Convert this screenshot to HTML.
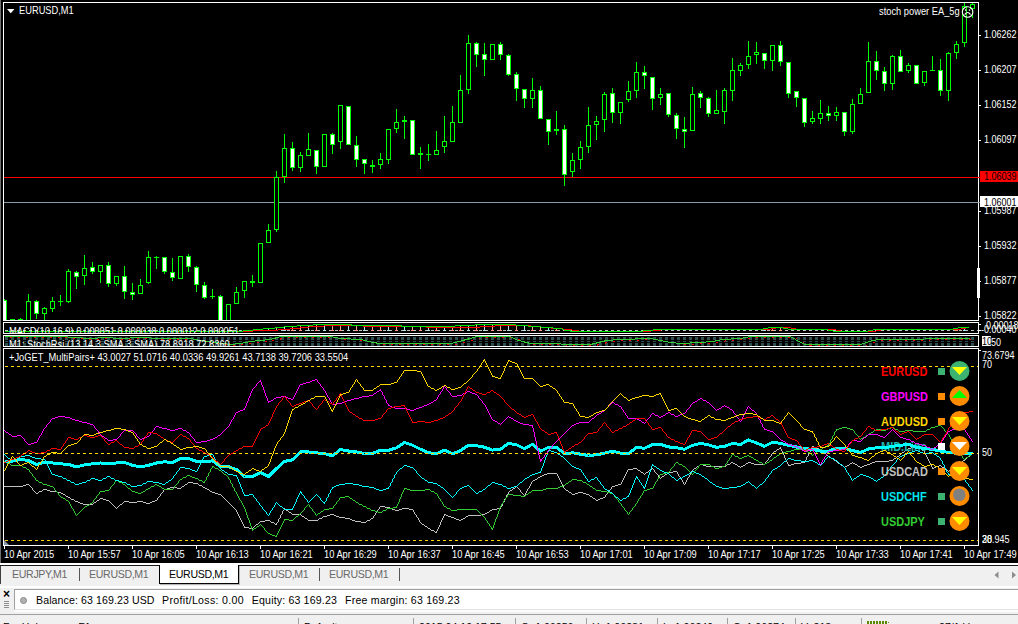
<!DOCTYPE html><html><head><meta charset="utf-8"><title>EURUSD,M1</title><style>
html,body{margin:0;padding:0}
body{width:1018px;height:624px;overflow:hidden;background:#f0f0f0;position:relative;font-family:"Liberation Sans",sans-serif}
#chart{position:absolute;left:0;top:0;width:1018px;height:563px;background:#000;overflow:hidden}
#chart svg{position:absolute;left:0;top:0}
.t{position:absolute;white-space:nowrap;color:#fff;font-size:10.2px;line-height:11px;transform:scaleX(0.913);transform-origin:0 0}
.ax{position:absolute;left:982px;color:#fff;font-size:10.2px;line-height:11px;white-space:nowrap;transform:scaleX(0.884);transform-origin:0 0}
.lg{position:absolute;white-space:nowrap;font-weight:bold;font-size:12.4px;line-height:14px;left:881px;transform:scaleX(0.886);transform-origin:0 0}
.tab{position:absolute;top:567px;font-size:10.6px;line-height:14px;color:#6a6a6a;white-space:nowrap;letter-spacing:-0.33px}
.sep{position:absolute;top:568px;width:1px;height:13px;background:#555}
.st{position:absolute;top:614px;height:10px;left:0;width:1018px;overflow:hidden}
.st span{position:absolute;top:7px;font-size:10.6px;line-height:13px;color:#000;white-space:nowrap}
.st i{position:absolute;top:4px;width:1px;height:8px;background:#a0a0a0}

</style></head><body>
<div id="chart">
<svg width="1018" height="563" viewBox="0 0 1018 563" shape-rendering="crispEdges">
<rect x="0" y="0" width="1" height="563" fill="#6d6d6d"/>
<rect x="4" y="177" width="974" height="1" fill="#ff0000"/>
<rect x="4" y="202" width="974" height="1" fill="#8a99a8"/>
<rect x="4" y="299" width="1" height="22" fill="#00ff00"/>
<rect x="2" y="300" width="5" height="21" fill="#00ff00"/>
<rect x="3" y="301" width="3" height="19" fill="#fff"/>
<rect x="12" y="319" width="1" height="3" fill="#00ff00"/>
<rect x="10" y="319" width="5" height="3" fill="#00ff00"/>
<rect x="11" y="320" width="3" height="1" fill="#000"/>
<rect x="20" y="318" width="1" height="4" fill="#00ff00"/>
<rect x="18" y="319" width="5" height="3" fill="#00ff00"/>
<rect x="19" y="320" width="3" height="1" fill="#000"/>
<rect x="28" y="294" width="1" height="28" fill="#00ff00"/>
<rect x="26" y="301" width="5" height="21" fill="#00ff00"/>
<rect x="27" y="302" width="3" height="19" fill="#000"/>
<rect x="36" y="300" width="1" height="19" fill="#00ff00"/>
<rect x="34" y="301" width="5" height="13" fill="#00ff00"/>
<rect x="35" y="302" width="3" height="11" fill="#fff"/>
<rect x="44" y="307" width="1" height="14" fill="#00ff00"/>
<rect x="42" y="308" width="5" height="6" fill="#00ff00"/>
<rect x="43" y="309" width="3" height="4" fill="#000"/>
<rect x="52" y="297" width="1" height="15" fill="#00ff00"/>
<rect x="50" y="301" width="5" height="8" fill="#00ff00"/>
<rect x="51" y="302" width="3" height="6" fill="#000"/>
<rect x="60" y="295" width="1" height="11" fill="#00ff00"/>
<rect x="58" y="301" width="5" height="1" fill="#00ff00"/>
<rect x="68" y="269" width="1" height="34" fill="#00ff00"/>
<rect x="66" y="271" width="5" height="31" fill="#00ff00"/>
<rect x="67" y="272" width="3" height="29" fill="#000"/>
<rect x="76" y="271" width="1" height="18" fill="#00ff00"/>
<rect x="74" y="272" width="5" height="5" fill="#00ff00"/>
<rect x="75" y="273" width="3" height="3" fill="#fff"/>
<rect x="84" y="255" width="1" height="30" fill="#00ff00"/>
<rect x="82" y="268" width="5" height="8" fill="#00ff00"/>
<rect x="83" y="269" width="3" height="6" fill="#000"/>
<rect x="92" y="262" width="1" height="12" fill="#00ff00"/>
<rect x="90" y="267" width="5" height="5" fill="#00ff00"/>
<rect x="91" y="268" width="3" height="3" fill="#fff"/>
<rect x="100" y="265" width="1" height="18" fill="#00ff00"/>
<rect x="98" y="265" width="5" height="7" fill="#00ff00"/>
<rect x="99" y="266" width="3" height="5" fill="#000"/>
<rect x="108" y="262" width="1" height="25" fill="#00ff00"/>
<rect x="106" y="265" width="5" height="19" fill="#00ff00"/>
<rect x="107" y="266" width="3" height="17" fill="#fff"/>
<rect x="116" y="276" width="1" height="10" fill="#00ff00"/>
<rect x="114" y="276" width="5" height="8" fill="#00ff00"/>
<rect x="115" y="277" width="3" height="6" fill="#000"/>
<rect x="124" y="266" width="1" height="33" fill="#00ff00"/>
<rect x="122" y="276" width="5" height="16" fill="#00ff00"/>
<rect x="123" y="277" width="3" height="14" fill="#fff"/>
<rect x="132" y="283" width="1" height="17" fill="#00ff00"/>
<rect x="130" y="292" width="5" height="3" fill="#00ff00"/>
<rect x="131" y="293" width="3" height="1" fill="#fff"/>
<rect x="140" y="279" width="1" height="15" fill="#00ff00"/>
<rect x="138" y="285" width="5" height="9" fill="#00ff00"/>
<rect x="139" y="286" width="3" height="7" fill="#000"/>
<rect x="148" y="251" width="1" height="33" fill="#00ff00"/>
<rect x="146" y="257" width="5" height="26" fill="#00ff00"/>
<rect x="147" y="258" width="3" height="24" fill="#000"/>
<rect x="156" y="256" width="1" height="13" fill="#00ff00"/>
<rect x="154" y="257" width="5" height="1" fill="#00ff00"/>
<rect x="164" y="257" width="1" height="17" fill="#00ff00"/>
<rect x="162" y="257" width="5" height="15" fill="#00ff00"/>
<rect x="163" y="258" width="3" height="13" fill="#fff"/>
<rect x="172" y="258" width="1" height="23" fill="#00ff00"/>
<rect x="170" y="272" width="5" height="6" fill="#00ff00"/>
<rect x="171" y="273" width="3" height="4" fill="#fff"/>
<rect x="180" y="256" width="1" height="23" fill="#00ff00"/>
<rect x="178" y="256" width="5" height="23" fill="#00ff00"/>
<rect x="179" y="257" width="3" height="21" fill="#000"/>
<rect x="188" y="254" width="1" height="18" fill="#00ff00"/>
<rect x="186" y="256" width="5" height="11" fill="#00ff00"/>
<rect x="187" y="257" width="3" height="9" fill="#fff"/>
<rect x="196" y="266" width="1" height="26" fill="#00ff00"/>
<rect x="194" y="267" width="5" height="18" fill="#00ff00"/>
<rect x="195" y="268" width="3" height="16" fill="#fff"/>
<rect x="204" y="282" width="1" height="17" fill="#00ff00"/>
<rect x="202" y="285" width="5" height="13" fill="#00ff00"/>
<rect x="203" y="286" width="3" height="11" fill="#fff"/>
<rect x="212" y="289" width="1" height="10" fill="#00ff00"/>
<rect x="210" y="296" width="5" height="1" fill="#00ff00"/>
<rect x="220" y="295" width="1" height="27" fill="#00ff00"/>
<rect x="218" y="296" width="5" height="26" fill="#00ff00"/>
<rect x="219" y="297" width="3" height="24" fill="#fff"/>
<rect x="228" y="304" width="1" height="18" fill="#00ff00"/>
<rect x="226" y="304" width="5" height="18" fill="#00ff00"/>
<rect x="227" y="305" width="3" height="16" fill="#000"/>
<rect x="236" y="287" width="1" height="17" fill="#00ff00"/>
<rect x="234" y="292" width="5" height="12" fill="#00ff00"/>
<rect x="235" y="293" width="3" height="10" fill="#000"/>
<rect x="244" y="281" width="1" height="17" fill="#00ff00"/>
<rect x="242" y="281" width="5" height="10" fill="#00ff00"/>
<rect x="243" y="282" width="3" height="8" fill="#000"/>
<rect x="252" y="275" width="1" height="12" fill="#00ff00"/>
<rect x="250" y="281" width="5" height="2" fill="#00ff00"/>
<rect x="260" y="243" width="1" height="40" fill="#00ff00"/>
<rect x="258" y="243" width="5" height="40" fill="#00ff00"/>
<rect x="259" y="244" width="3" height="38" fill="#000"/>
<rect x="268" y="224" width="1" height="19" fill="#00ff00"/>
<rect x="266" y="230" width="5" height="13" fill="#00ff00"/>
<rect x="267" y="231" width="3" height="11" fill="#000"/>
<rect x="276" y="171" width="1" height="61" fill="#00ff00"/>
<rect x="274" y="177" width="5" height="53" fill="#00ff00"/>
<rect x="275" y="178" width="3" height="51" fill="#000"/>
<rect x="284" y="134" width="1" height="49" fill="#00ff00"/>
<rect x="282" y="148" width="5" height="29" fill="#00ff00"/>
<rect x="283" y="149" width="3" height="27" fill="#000"/>
<rect x="292" y="142" width="1" height="29" fill="#00ff00"/>
<rect x="290" y="148" width="5" height="20" fill="#00ff00"/>
<rect x="291" y="149" width="3" height="18" fill="#fff"/>
<rect x="300" y="152" width="1" height="20" fill="#00ff00"/>
<rect x="298" y="155" width="5" height="13" fill="#00ff00"/>
<rect x="299" y="156" width="3" height="11" fill="#000"/>
<rect x="308" y="133" width="1" height="23" fill="#00ff00"/>
<rect x="306" y="149" width="5" height="7" fill="#00ff00"/>
<rect x="307" y="150" width="3" height="5" fill="#000"/>
<rect x="316" y="150" width="1" height="24" fill="#00ff00"/>
<rect x="314" y="150" width="5" height="17" fill="#00ff00"/>
<rect x="315" y="151" width="3" height="15" fill="#fff"/>
<rect x="324" y="134" width="1" height="33" fill="#00ff00"/>
<rect x="322" y="134" width="5" height="33" fill="#00ff00"/>
<rect x="323" y="135" width="3" height="31" fill="#000"/>
<rect x="332" y="133" width="1" height="21" fill="#00ff00"/>
<rect x="330" y="134" width="5" height="11" fill="#00ff00"/>
<rect x="331" y="135" width="3" height="9" fill="#fff"/>
<rect x="340" y="105" width="1" height="44" fill="#00ff00"/>
<rect x="338" y="105" width="5" height="37" fill="#00ff00"/>
<rect x="339" y="106" width="3" height="35" fill="#000"/>
<rect x="348" y="106" width="1" height="39" fill="#00ff00"/>
<rect x="346" y="106" width="5" height="39" fill="#00ff00"/>
<rect x="347" y="107" width="3" height="37" fill="#fff"/>
<rect x="356" y="136" width="1" height="31" fill="#00ff00"/>
<rect x="354" y="145" width="5" height="15" fill="#00ff00"/>
<rect x="355" y="146" width="3" height="13" fill="#fff"/>
<rect x="364" y="159" width="1" height="15" fill="#00ff00"/>
<rect x="362" y="159" width="5" height="5" fill="#00ff00"/>
<rect x="363" y="160" width="3" height="3" fill="#fff"/>
<rect x="372" y="160" width="1" height="13" fill="#00ff00"/>
<rect x="370" y="165" width="5" height="2" fill="#00ff00"/>
<rect x="380" y="153" width="1" height="16" fill="#00ff00"/>
<rect x="378" y="159" width="5" height="6" fill="#00ff00"/>
<rect x="379" y="160" width="3" height="4" fill="#000"/>
<rect x="388" y="129" width="1" height="35" fill="#00ff00"/>
<rect x="386" y="129" width="5" height="31" fill="#00ff00"/>
<rect x="387" y="130" width="3" height="29" fill="#000"/>
<rect x="396" y="109" width="1" height="24" fill="#00ff00"/>
<rect x="394" y="122" width="5" height="7" fill="#00ff00"/>
<rect x="395" y="123" width="3" height="5" fill="#000"/>
<rect x="404" y="116" width="1" height="23" fill="#00ff00"/>
<rect x="402" y="120" width="5" height="2" fill="#00ff00"/>
<rect x="412" y="120" width="1" height="35" fill="#00ff00"/>
<rect x="410" y="120" width="5" height="35" fill="#00ff00"/>
<rect x="411" y="121" width="3" height="33" fill="#fff"/>
<rect x="420" y="147" width="1" height="22" fill="#00ff00"/>
<rect x="418" y="153" width="5" height="2" fill="#00ff00"/>
<rect x="428" y="144" width="1" height="17" fill="#00ff00"/>
<rect x="426" y="154" width="5" height="1" fill="#00ff00"/>
<rect x="436" y="131" width="1" height="24" fill="#00ff00"/>
<rect x="434" y="150" width="5" height="5" fill="#00ff00"/>
<rect x="435" y="151" width="3" height="3" fill="#000"/>
<rect x="444" y="116" width="1" height="37" fill="#00ff00"/>
<rect x="442" y="141" width="5" height="6" fill="#00ff00"/>
<rect x="443" y="142" width="3" height="4" fill="#000"/>
<rect x="452" y="106" width="1" height="36" fill="#00ff00"/>
<rect x="450" y="122" width="5" height="20" fill="#00ff00"/>
<rect x="451" y="123" width="3" height="18" fill="#000"/>
<rect x="460" y="75" width="1" height="48" fill="#00ff00"/>
<rect x="458" y="90" width="5" height="33" fill="#00ff00"/>
<rect x="459" y="91" width="3" height="31" fill="#000"/>
<rect x="468" y="35" width="1" height="59" fill="#00ff00"/>
<rect x="466" y="43" width="5" height="47" fill="#00ff00"/>
<rect x="467" y="44" width="3" height="45" fill="#000"/>
<rect x="476" y="42" width="1" height="25" fill="#00ff00"/>
<rect x="474" y="43" width="5" height="12" fill="#00ff00"/>
<rect x="475" y="44" width="3" height="10" fill="#fff"/>
<rect x="484" y="43" width="1" height="33" fill="#00ff00"/>
<rect x="482" y="54" width="5" height="6" fill="#00ff00"/>
<rect x="483" y="55" width="3" height="4" fill="#fff"/>
<rect x="492" y="44" width="1" height="16" fill="#00ff00"/>
<rect x="490" y="44" width="5" height="16" fill="#00ff00"/>
<rect x="491" y="45" width="3" height="14" fill="#000"/>
<rect x="500" y="42" width="1" height="18" fill="#00ff00"/>
<rect x="498" y="44" width="5" height="11" fill="#00ff00"/>
<rect x="499" y="45" width="3" height="9" fill="#fff"/>
<rect x="508" y="54" width="1" height="22" fill="#00ff00"/>
<rect x="506" y="55" width="5" height="20" fill="#00ff00"/>
<rect x="507" y="56" width="3" height="18" fill="#fff"/>
<rect x="516" y="72" width="1" height="29" fill="#00ff00"/>
<rect x="514" y="74" width="5" height="15" fill="#00ff00"/>
<rect x="515" y="75" width="3" height="13" fill="#fff"/>
<rect x="524" y="89" width="1" height="19" fill="#00ff00"/>
<rect x="522" y="89" width="5" height="10" fill="#00ff00"/>
<rect x="523" y="90" width="3" height="8" fill="#fff"/>
<rect x="532" y="78" width="1" height="30" fill="#00ff00"/>
<rect x="530" y="90" width="5" height="9" fill="#00ff00"/>
<rect x="531" y="91" width="3" height="7" fill="#000"/>
<rect x="540" y="86" width="1" height="33" fill="#00ff00"/>
<rect x="538" y="90" width="5" height="29" fill="#00ff00"/>
<rect x="539" y="91" width="3" height="27" fill="#fff"/>
<rect x="548" y="119" width="1" height="26" fill="#00ff00"/>
<rect x="546" y="119" width="5" height="13" fill="#00ff00"/>
<rect x="547" y="120" width="3" height="11" fill="#fff"/>
<rect x="556" y="111" width="1" height="24" fill="#00ff00"/>
<rect x="554" y="129" width="5" height="2" fill="#00ff00"/>
<rect x="564" y="125" width="1" height="61" fill="#00ff00"/>
<rect x="562" y="129" width="5" height="46" fill="#00ff00"/>
<rect x="563" y="130" width="3" height="44" fill="#fff"/>
<rect x="572" y="153" width="1" height="24" fill="#00ff00"/>
<rect x="570" y="160" width="5" height="12" fill="#00ff00"/>
<rect x="571" y="161" width="3" height="10" fill="#000"/>
<rect x="580" y="141" width="1" height="28" fill="#00ff00"/>
<rect x="578" y="147" width="5" height="13" fill="#00ff00"/>
<rect x="579" y="148" width="3" height="11" fill="#000"/>
<rect x="588" y="107" width="1" height="46" fill="#00ff00"/>
<rect x="586" y="125" width="5" height="22" fill="#00ff00"/>
<rect x="587" y="126" width="3" height="20" fill="#000"/>
<rect x="596" y="116" width="1" height="24" fill="#00ff00"/>
<rect x="594" y="121" width="5" height="4" fill="#00ff00"/>
<rect x="595" y="122" width="3" height="2" fill="#000"/>
<rect x="604" y="92" width="1" height="40" fill="#00ff00"/>
<rect x="602" y="94" width="5" height="26" fill="#00ff00"/>
<rect x="603" y="95" width="3" height="24" fill="#000"/>
<rect x="612" y="88" width="1" height="35" fill="#00ff00"/>
<rect x="610" y="93" width="5" height="20" fill="#00ff00"/>
<rect x="611" y="94" width="3" height="18" fill="#fff"/>
<rect x="620" y="102" width="1" height="22" fill="#00ff00"/>
<rect x="618" y="102" width="5" height="11" fill="#00ff00"/>
<rect x="619" y="103" width="3" height="9" fill="#000"/>
<rect x="628" y="81" width="1" height="21" fill="#00ff00"/>
<rect x="626" y="91" width="5" height="9" fill="#00ff00"/>
<rect x="627" y="92" width="3" height="7" fill="#000"/>
<rect x="636" y="62" width="1" height="36" fill="#00ff00"/>
<rect x="634" y="72" width="5" height="19" fill="#00ff00"/>
<rect x="635" y="73" width="3" height="17" fill="#000"/>
<rect x="644" y="66" width="1" height="23" fill="#00ff00"/>
<rect x="642" y="72" width="5" height="4" fill="#00ff00"/>
<rect x="643" y="73" width="3" height="2" fill="#fff"/>
<rect x="652" y="77" width="1" height="33" fill="#00ff00"/>
<rect x="650" y="77" width="5" height="22" fill="#00ff00"/>
<rect x="651" y="78" width="3" height="20" fill="#fff"/>
<rect x="660" y="88" width="1" height="17" fill="#00ff00"/>
<rect x="658" y="94" width="5" height="4" fill="#00ff00"/>
<rect x="659" y="95" width="3" height="2" fill="#000"/>
<rect x="668" y="93" width="1" height="24" fill="#00ff00"/>
<rect x="666" y="93" width="5" height="22" fill="#00ff00"/>
<rect x="667" y="94" width="3" height="20" fill="#fff"/>
<rect x="676" y="113" width="1" height="26" fill="#00ff00"/>
<rect x="674" y="115" width="5" height="14" fill="#00ff00"/>
<rect x="675" y="116" width="3" height="12" fill="#fff"/>
<rect x="684" y="117" width="1" height="31" fill="#00ff00"/>
<rect x="682" y="129" width="5" height="3" fill="#00ff00"/>
<rect x="683" y="130" width="3" height="1" fill="#fff"/>
<rect x="692" y="87" width="1" height="44" fill="#00ff00"/>
<rect x="690" y="94" width="5" height="37" fill="#00ff00"/>
<rect x="691" y="95" width="3" height="35" fill="#000"/>
<rect x="700" y="91" width="1" height="17" fill="#00ff00"/>
<rect x="698" y="93" width="5" height="5" fill="#00ff00"/>
<rect x="699" y="94" width="3" height="3" fill="#fff"/>
<rect x="708" y="97" width="1" height="20" fill="#00ff00"/>
<rect x="706" y="98" width="5" height="16" fill="#00ff00"/>
<rect x="707" y="99" width="3" height="14" fill="#fff"/>
<rect x="716" y="90" width="1" height="24" fill="#00ff00"/>
<rect x="714" y="110" width="5" height="4" fill="#00ff00"/>
<rect x="715" y="111" width="3" height="2" fill="#000"/>
<rect x="724" y="88" width="1" height="36" fill="#00ff00"/>
<rect x="722" y="90" width="5" height="22" fill="#00ff00"/>
<rect x="723" y="91" width="3" height="20" fill="#000"/>
<rect x="732" y="58" width="1" height="43" fill="#00ff00"/>
<rect x="730" y="70" width="5" height="21" fill="#00ff00"/>
<rect x="731" y="71" width="3" height="19" fill="#000"/>
<rect x="740" y="63" width="1" height="13" fill="#00ff00"/>
<rect x="738" y="65" width="5" height="6" fill="#00ff00"/>
<rect x="739" y="66" width="3" height="4" fill="#000"/>
<rect x="748" y="41" width="1" height="28" fill="#00ff00"/>
<rect x="746" y="56" width="5" height="9" fill="#00ff00"/>
<rect x="747" y="57" width="3" height="7" fill="#000"/>
<rect x="756" y="42" width="1" height="22" fill="#00ff00"/>
<rect x="754" y="52" width="5" height="3" fill="#00ff00"/>
<rect x="755" y="53" width="3" height="1" fill="#000"/>
<rect x="764" y="53" width="1" height="16" fill="#00ff00"/>
<rect x="762" y="53" width="5" height="8" fill="#00ff00"/>
<rect x="763" y="54" width="3" height="6" fill="#fff"/>
<rect x="772" y="45" width="1" height="26" fill="#00ff00"/>
<rect x="770" y="45" width="5" height="16" fill="#00ff00"/>
<rect x="771" y="46" width="3" height="14" fill="#000"/>
<rect x="780" y="41" width="1" height="25" fill="#00ff00"/>
<rect x="778" y="45" width="5" height="17" fill="#00ff00"/>
<rect x="779" y="46" width="3" height="15" fill="#fff"/>
<rect x="788" y="62" width="1" height="36" fill="#00ff00"/>
<rect x="786" y="62" width="5" height="32" fill="#00ff00"/>
<rect x="787" y="63" width="3" height="30" fill="#fff"/>
<rect x="796" y="91" width="1" height="16" fill="#00ff00"/>
<rect x="794" y="91" width="5" height="7" fill="#00ff00"/>
<rect x="795" y="92" width="3" height="5" fill="#fff"/>
<rect x="804" y="98" width="1" height="29" fill="#00ff00"/>
<rect x="802" y="98" width="5" height="25" fill="#00ff00"/>
<rect x="803" y="99" width="3" height="23" fill="#fff"/>
<rect x="812" y="111" width="1" height="13" fill="#00ff00"/>
<rect x="810" y="118" width="5" height="4" fill="#00ff00"/>
<rect x="811" y="119" width="3" height="2" fill="#000"/>
<rect x="820" y="100" width="1" height="24" fill="#00ff00"/>
<rect x="818" y="113" width="5" height="6" fill="#00ff00"/>
<rect x="819" y="114" width="3" height="4" fill="#000"/>
<rect x="828" y="106" width="1" height="15" fill="#00ff00"/>
<rect x="826" y="113" width="5" height="3" fill="#00ff00"/>
<rect x="827" y="114" width="3" height="1" fill="#fff"/>
<rect x="836" y="107" width="1" height="14" fill="#00ff00"/>
<rect x="834" y="112" width="5" height="4" fill="#00ff00"/>
<rect x="835" y="113" width="3" height="2" fill="#000"/>
<rect x="844" y="112" width="1" height="24" fill="#00ff00"/>
<rect x="842" y="112" width="5" height="20" fill="#00ff00"/>
<rect x="843" y="113" width="3" height="18" fill="#fff"/>
<rect x="852" y="99" width="1" height="35" fill="#00ff00"/>
<rect x="850" y="104" width="5" height="28" fill="#00ff00"/>
<rect x="851" y="105" width="3" height="26" fill="#000"/>
<rect x="860" y="88" width="1" height="16" fill="#00ff00"/>
<rect x="858" y="94" width="5" height="10" fill="#00ff00"/>
<rect x="859" y="95" width="3" height="8" fill="#000"/>
<rect x="868" y="42" width="1" height="51" fill="#00ff00"/>
<rect x="866" y="61" width="5" height="32" fill="#00ff00"/>
<rect x="867" y="62" width="3" height="30" fill="#000"/>
<rect x="876" y="51" width="1" height="29" fill="#00ff00"/>
<rect x="874" y="61" width="5" height="10" fill="#00ff00"/>
<rect x="875" y="62" width="3" height="8" fill="#fff"/>
<rect x="884" y="67" width="1" height="24" fill="#00ff00"/>
<rect x="882" y="71" width="5" height="13" fill="#00ff00"/>
<rect x="883" y="72" width="3" height="11" fill="#fff"/>
<rect x="892" y="55" width="1" height="35" fill="#00ff00"/>
<rect x="890" y="56" width="5" height="28" fill="#00ff00"/>
<rect x="891" y="57" width="3" height="26" fill="#000"/>
<rect x="900" y="50" width="1" height="22" fill="#00ff00"/>
<rect x="898" y="56" width="5" height="16" fill="#00ff00"/>
<rect x="899" y="57" width="3" height="14" fill="#fff"/>
<rect x="908" y="63" width="1" height="10" fill="#00ff00"/>
<rect x="906" y="65" width="5" height="6" fill="#00ff00"/>
<rect x="907" y="66" width="3" height="4" fill="#000"/>
<rect x="916" y="65" width="1" height="19" fill="#00ff00"/>
<rect x="914" y="65" width="5" height="19" fill="#00ff00"/>
<rect x="915" y="66" width="3" height="17" fill="#fff"/>
<rect x="924" y="71" width="1" height="15" fill="#00ff00"/>
<rect x="922" y="71" width="5" height="12" fill="#00ff00"/>
<rect x="923" y="72" width="3" height="10" fill="#000"/>
<rect x="932" y="56" width="1" height="14" fill="#00ff00"/>
<rect x="930" y="70" width="5" height="1" fill="#00ff00"/>
<rect x="940" y="59" width="1" height="37" fill="#00ff00"/>
<rect x="938" y="70" width="5" height="21" fill="#00ff00"/>
<rect x="939" y="71" width="3" height="19" fill="#fff"/>
<rect x="948" y="52" width="1" height="49" fill="#00ff00"/>
<rect x="946" y="53" width="5" height="38" fill="#00ff00"/>
<rect x="947" y="54" width="3" height="36" fill="#000"/>
<rect x="956" y="41" width="1" height="18" fill="#00ff00"/>
<rect x="954" y="44" width="5" height="9" fill="#00ff00"/>
<rect x="955" y="45" width="3" height="7" fill="#000"/>
<rect x="964" y="3" width="1" height="44" fill="#00ff00"/>
<rect x="962" y="6" width="5" height="37" fill="#00ff00"/>
<rect x="963" y="7" width="3" height="35" fill="#000"/>
<rect x="972" y="3" width="1" height="15" fill="#00ff00"/>
<rect x="970" y="4" width="5" height="5" fill="#00ff00"/>
<rect x="971" y="5" width="3" height="3" fill="#000"/>
<rect x="0" y="321" width="1018" height="242" fill="#000"/>
<rect x="1" y="0" width="2" height="563" fill="#000"/>
<rect x="0" y="321" width="1" height="242" fill="#6d6d6d"/>
<rect x="3" y="2" width="976" height="1" fill="#fff"/>
<rect x="3" y="2" width="1" height="544" fill="#fff"/>
<rect x="978" y="2" width="1" height="544" fill="#fff"/>
<rect x="3" y="320" width="976" height="1" fill="#fff"/>
<rect x="3" y="322" width="976" height="1" fill="#fff"/>
<rect x="3" y="333" width="976" height="1" fill="#fff"/>
<rect x="3" y="335" width="976" height="1" fill="#fff"/>
<rect x="3" y="346" width="976" height="1" fill="#fff"/>
<rect x="3" y="348" width="976" height="1" fill="#fff"/>
<rect x="3" y="545" width="976" height="1" fill="#fff"/>
<rect x="0" y="321" width="1018" height="1" fill="#000"/>
<rect x="0" y="321" width="1" height="1" fill="#6d6d6d"/>
<rect x="0" y="334" width="1018" height="1" fill="#000"/>
<rect x="0" y="334" width="1" height="1" fill="#6d6d6d"/>
<rect x="0" y="347" width="1018" height="1" fill="#000"/>
<rect x="0" y="347" width="1" height="1" fill="#6d6d6d"/>
<rect x="977" y="268" width="3" height="30" fill="#fff"/>
<rect x="979" y="35" width="2" height="1" fill="#fff"/>
<rect x="979" y="70" width="2" height="1" fill="#fff"/>
<rect x="979" y="105" width="2" height="1" fill="#fff"/>
<rect x="979" y="140" width="2" height="1" fill="#fff"/>
<rect x="979" y="211" width="2" height="1" fill="#fff"/>
<rect x="979" y="246" width="2" height="1" fill="#fff"/>
<rect x="979" y="281" width="2" height="1" fill="#fff"/>
<rect x="979" y="316" width="2" height="1" fill="#fff"/>
<rect x="980" y="171" width="38" height="11" fill="#ff0000"/><rect x="978" y="177" width="2" height="1" fill="#ff0000"/><rect x="978" y="202" width="2" height="1" fill="#8a99a8"/>
<rect x="980" y="196" width="38" height="11" fill="#fff"/>
<path d="M5 330.5H978" stroke="#c0c0c0" stroke-width="1" stroke-dasharray="3 3" fill="none"/>
<rect x="268" y="329" width="1" height="2" fill="#b0e8f0"/>
<rect x="267" y="330" width="3" height="1" fill="#b0e8f0"/>
<rect x="276" y="328" width="1" height="3" fill="#ffa07a"/>
<rect x="275" y="330" width="3" height="1" fill="#ffa07a"/>
<rect x="284" y="327" width="1" height="4" fill="#b0e8f0"/>
<rect x="283" y="330" width="3" height="1" fill="#b0e8f0"/>
<rect x="292" y="327" width="1" height="4" fill="#ffa07a"/>
<rect x="291" y="330" width="3" height="1" fill="#ffa07a"/>
<rect x="300" y="326" width="1" height="5" fill="#ffa07a"/>
<rect x="299" y="330" width="3" height="1" fill="#ffa07a"/>
<rect x="308" y="326" width="1" height="5" fill="#b0e8f0"/>
<rect x="307" y="330" width="3" height="1" fill="#b0e8f0"/>
<rect x="316" y="325" width="1" height="6" fill="#ffa07a"/>
<rect x="315" y="330" width="3" height="1" fill="#ffa07a"/>
<rect x="324" y="325" width="1" height="6" fill="#b0e8f0"/>
<rect x="323" y="330" width="3" height="1" fill="#b0e8f0"/>
<rect x="332" y="325" width="1" height="6" fill="#ffa07a"/>
<rect x="331" y="330" width="3" height="1" fill="#ffa07a"/>
<rect x="340" y="325" width="1" height="6" fill="#ffa07a"/>
<rect x="339" y="330" width="3" height="1" fill="#ffa07a"/>
<rect x="348" y="325" width="1" height="6" fill="#b0e8f0"/>
<rect x="347" y="330" width="3" height="1" fill="#b0e8f0"/>
<rect x="356" y="326" width="1" height="5" fill="#ffa07a"/>
<rect x="355" y="330" width="3" height="1" fill="#ffa07a"/>
<rect x="364" y="326" width="1" height="5" fill="#b0e8f0"/>
<rect x="363" y="330" width="3" height="1" fill="#b0e8f0"/>
<rect x="372" y="326" width="1" height="5" fill="#ffa07a"/>
<rect x="371" y="330" width="3" height="1" fill="#ffa07a"/>
<rect x="380" y="326" width="1" height="5" fill="#ffa07a"/>
<rect x="379" y="330" width="3" height="1" fill="#ffa07a"/>
<rect x="388" y="326" width="1" height="5" fill="#b0e8f0"/>
<rect x="387" y="330" width="3" height="1" fill="#b0e8f0"/>
<rect x="396" y="326" width="1" height="5" fill="#ffa07a"/>
<rect x="395" y="330" width="3" height="1" fill="#ffa07a"/>
<rect x="404" y="327" width="1" height="4" fill="#b0e8f0"/>
<rect x="403" y="330" width="3" height="1" fill="#b0e8f0"/>
<rect x="412" y="327" width="1" height="4" fill="#ffa07a"/>
<rect x="411" y="330" width="3" height="1" fill="#ffa07a"/>
<rect x="420" y="327" width="1" height="4" fill="#ffa07a"/>
<rect x="419" y="330" width="3" height="1" fill="#ffa07a"/>
<rect x="428" y="327" width="1" height="4" fill="#b0e8f0"/>
<rect x="427" y="330" width="3" height="1" fill="#b0e8f0"/>
<rect x="436" y="327" width="1" height="4" fill="#ffa07a"/>
<rect x="435" y="330" width="3" height="1" fill="#ffa07a"/>
<rect x="444" y="327" width="1" height="4" fill="#b0e8f0"/>
<rect x="443" y="330" width="3" height="1" fill="#b0e8f0"/>
<rect x="452" y="327" width="1" height="4" fill="#ffa07a"/>
<rect x="451" y="330" width="3" height="1" fill="#ffa07a"/>
<rect x="460" y="326" width="1" height="5" fill="#ffa07a"/>
<rect x="459" y="330" width="3" height="1" fill="#ffa07a"/>
<rect x="468" y="326" width="1" height="5" fill="#b0e8f0"/>
<rect x="467" y="330" width="3" height="1" fill="#b0e8f0"/>
<rect x="476" y="325" width="1" height="6" fill="#ffa07a"/>
<rect x="475" y="330" width="3" height="1" fill="#ffa07a"/>
<rect x="484" y="325" width="1" height="6" fill="#b0e8f0"/>
<rect x="483" y="330" width="3" height="1" fill="#b0e8f0"/>
<rect x="492" y="325" width="1" height="6" fill="#ffa07a"/>
<rect x="491" y="330" width="3" height="1" fill="#ffa07a"/>
<rect x="500" y="325" width="1" height="6" fill="#ffa07a"/>
<rect x="499" y="330" width="3" height="1" fill="#ffa07a"/>
<rect x="508" y="325" width="1" height="6" fill="#b0e8f0"/>
<rect x="507" y="330" width="3" height="1" fill="#b0e8f0"/>
<rect x="516" y="326" width="1" height="5" fill="#ffa07a"/>
<rect x="515" y="330" width="3" height="1" fill="#ffa07a"/>
<rect x="524" y="326" width="1" height="5" fill="#b0e8f0"/>
<rect x="523" y="330" width="3" height="1" fill="#b0e8f0"/>
<rect x="532" y="327" width="1" height="4" fill="#ffa07a"/>
<rect x="531" y="330" width="3" height="1" fill="#ffa07a"/>
<rect x="540" y="327" width="1" height="4" fill="#ffa07a"/>
<rect x="539" y="330" width="3" height="1" fill="#ffa07a"/>
<rect x="548" y="328" width="1" height="3" fill="#b0e8f0"/>
<rect x="547" y="330" width="3" height="1" fill="#b0e8f0"/>
<rect x="556" y="329" width="1" height="2" fill="#ffa07a"/>
<rect x="555" y="330" width="3" height="1" fill="#ffa07a"/>
<rect x="764" y="329" width="1" height="2" fill="#b0e8f0"/>
<rect x="763" y="330" width="3" height="1" fill="#b0e8f0"/>
<rect x="772" y="328" width="1" height="3" fill="#ffa07a"/>
<rect x="771" y="330" width="3" height="1" fill="#ffa07a"/>
<rect x="780" y="328" width="1" height="3" fill="#ffa07a"/>
<rect x="779" y="330" width="3" height="1" fill="#ffa07a"/>
<rect x="956" y="329" width="1" height="2" fill="#ffa07a"/>
<rect x="955" y="330" width="3" height="1" fill="#ffa07a"/>
<rect x="964" y="328" width="1" height="3" fill="#b0e8f0"/>
<rect x="963" y="330" width="3" height="1" fill="#b0e8f0"/>
<polyline points="4,331 250,331 255,330 262,330 270,330 285,329 295,328 305,327 313,326 335,325 360,325 365,326 420,326 430,327 470,327 490,326 500,325 525,325 535,326 545,327 555,328 570,329 573,330 583,331 648,331 653,330 668,329 708,329 768,329 773,328 778,327 788,327 793,328 798,329 833,329 838,330 843,331 873,331 878,330 883,329 958,329 963,328 968,327" fill="none" stroke="#ff0000" stroke-width="1" transform="translate(0.5,0.5)"/>
<polyline points="4,331 240,331 245,330 250,330 256,329 270,328 280,327 288,326 305,325 320,324 350,324 352,325 400,325 402,326 440,326 470,325 480,324 510,324 520,325 535,326 545,327 560,328 565,330 575,331 640,331 645,330 660,329 700,329 760,329 765,328 770,327 780,327 785,328 790,329 825,329 830,330 835,331 865,331 870,330 875,329 950,329 955,328 960,327 968,327" fill="none" stroke="#00e000" stroke-width="1" transform="translate(0.5,0.5)"/>
<rect x="5" y="337" width="3" height="3" fill="#2f4f4f"/>
<rect x="5" y="343" width="3" height="3" fill="#2f4f4f"/>
<rect x="5" y="341" width="3" height="1" fill="#2f4f4f"/>
<rect x="11" y="337" width="3" height="3" fill="#2f4f4f"/>
<rect x="11" y="343" width="3" height="3" fill="#2f4f4f"/>
<rect x="11" y="341" width="3" height="1" fill="#2f4f4f"/>
<rect x="17" y="337" width="3" height="3" fill="#2f4f4f"/>
<rect x="17" y="343" width="3" height="3" fill="#2f4f4f"/>
<rect x="17" y="341" width="3" height="1" fill="#2f4f4f"/>
<rect x="23" y="337" width="3" height="3" fill="#2f4f4f"/>
<rect x="23" y="343" width="3" height="3" fill="#2f4f4f"/>
<rect x="23" y="341" width="3" height="1" fill="#2f4f4f"/>
<rect x="29" y="337" width="3" height="3" fill="#2f4f4f"/>
<rect x="29" y="343" width="3" height="3" fill="#2f4f4f"/>
<rect x="29" y="341" width="3" height="1" fill="#2f4f4f"/>
<rect x="35" y="337" width="3" height="3" fill="#2f4f4f"/>
<rect x="35" y="343" width="3" height="3" fill="#2f4f4f"/>
<rect x="35" y="341" width="3" height="1" fill="#2f4f4f"/>
<rect x="41" y="337" width="3" height="3" fill="#2f4f4f"/>
<rect x="41" y="343" width="3" height="3" fill="#2f4f4f"/>
<rect x="41" y="341" width="3" height="1" fill="#2f4f4f"/>
<rect x="47" y="337" width="3" height="3" fill="#2f4f4f"/>
<rect x="47" y="343" width="3" height="3" fill="#2f4f4f"/>
<rect x="47" y="341" width="3" height="1" fill="#2f4f4f"/>
<rect x="53" y="337" width="3" height="3" fill="#2f4f4f"/>
<rect x="53" y="343" width="3" height="3" fill="#2f4f4f"/>
<rect x="53" y="341" width="3" height="1" fill="#2f4f4f"/>
<rect x="59" y="337" width="3" height="3" fill="#2f4f4f"/>
<rect x="59" y="343" width="3" height="3" fill="#2f4f4f"/>
<rect x="59" y="341" width="3" height="1" fill="#2f4f4f"/>
<rect x="65" y="337" width="3" height="3" fill="#2f4f4f"/>
<rect x="65" y="343" width="3" height="3" fill="#2f4f4f"/>
<rect x="65" y="341" width="3" height="1" fill="#2f4f4f"/>
<rect x="71" y="337" width="3" height="3" fill="#2f4f4f"/>
<rect x="71" y="343" width="3" height="3" fill="#2f4f4f"/>
<rect x="71" y="341" width="3" height="1" fill="#2f4f4f"/>
<rect x="77" y="337" width="3" height="3" fill="#2f4f4f"/>
<rect x="77" y="343" width="3" height="3" fill="#2f4f4f"/>
<rect x="77" y="341" width="3" height="1" fill="#2f4f4f"/>
<rect x="83" y="337" width="3" height="3" fill="#2f4f4f"/>
<rect x="83" y="343" width="3" height="3" fill="#2f4f4f"/>
<rect x="83" y="341" width="3" height="1" fill="#2f4f4f"/>
<rect x="89" y="337" width="3" height="3" fill="#2f4f4f"/>
<rect x="89" y="343" width="3" height="3" fill="#2f4f4f"/>
<rect x="89" y="341" width="3" height="1" fill="#2f4f4f"/>
<rect x="95" y="337" width="3" height="3" fill="#2f4f4f"/>
<rect x="95" y="343" width="3" height="3" fill="#2f4f4f"/>
<rect x="95" y="341" width="3" height="1" fill="#2f4f4f"/>
<rect x="101" y="337" width="3" height="3" fill="#2f4f4f"/>
<rect x="101" y="343" width="3" height="3" fill="#2f4f4f"/>
<rect x="101" y="341" width="3" height="1" fill="#2f4f4f"/>
<rect x="107" y="337" width="3" height="3" fill="#2f4f4f"/>
<rect x="107" y="343" width="3" height="3" fill="#2f4f4f"/>
<rect x="107" y="341" width="3" height="1" fill="#2f4f4f"/>
<rect x="113" y="337" width="3" height="3" fill="#2f4f4f"/>
<rect x="113" y="343" width="3" height="3" fill="#2f4f4f"/>
<rect x="113" y="341" width="3" height="1" fill="#2f4f4f"/>
<rect x="119" y="337" width="3" height="3" fill="#2f4f4f"/>
<rect x="119" y="343" width="3" height="3" fill="#2f4f4f"/>
<rect x="119" y="341" width="3" height="1" fill="#2f4f4f"/>
<rect x="125" y="337" width="3" height="3" fill="#2f4f4f"/>
<rect x="125" y="343" width="3" height="3" fill="#2f4f4f"/>
<rect x="125" y="341" width="3" height="1" fill="#2f4f4f"/>
<rect x="131" y="337" width="3" height="3" fill="#2f4f4f"/>
<rect x="131" y="343" width="3" height="3" fill="#2f4f4f"/>
<rect x="131" y="341" width="3" height="1" fill="#2f4f4f"/>
<rect x="137" y="337" width="3" height="3" fill="#2f4f4f"/>
<rect x="137" y="343" width="3" height="3" fill="#2f4f4f"/>
<rect x="137" y="341" width="3" height="1" fill="#2f4f4f"/>
<rect x="143" y="337" width="3" height="3" fill="#2f4f4f"/>
<rect x="143" y="343" width="3" height="3" fill="#2f4f4f"/>
<rect x="143" y="341" width="3" height="1" fill="#2f4f4f"/>
<rect x="149" y="337" width="3" height="3" fill="#2f4f4f"/>
<rect x="149" y="343" width="3" height="3" fill="#2f4f4f"/>
<rect x="149" y="341" width="3" height="1" fill="#2f4f4f"/>
<rect x="155" y="337" width="3" height="3" fill="#2f4f4f"/>
<rect x="155" y="343" width="3" height="3" fill="#2f4f4f"/>
<rect x="155" y="341" width="3" height="1" fill="#2f4f4f"/>
<rect x="161" y="337" width="3" height="3" fill="#2f4f4f"/>
<rect x="161" y="343" width="3" height="3" fill="#2f4f4f"/>
<rect x="161" y="341" width="3" height="1" fill="#2f4f4f"/>
<rect x="167" y="337" width="3" height="3" fill="#2f4f4f"/>
<rect x="167" y="343" width="3" height="3" fill="#2f4f4f"/>
<rect x="167" y="341" width="3" height="1" fill="#2f4f4f"/>
<rect x="173" y="337" width="3" height="3" fill="#2f4f4f"/>
<rect x="173" y="343" width="3" height="3" fill="#2f4f4f"/>
<rect x="173" y="341" width="3" height="1" fill="#2f4f4f"/>
<rect x="179" y="337" width="3" height="3" fill="#2f4f4f"/>
<rect x="179" y="343" width="3" height="3" fill="#2f4f4f"/>
<rect x="179" y="341" width="3" height="1" fill="#2f4f4f"/>
<rect x="185" y="337" width="3" height="3" fill="#2f4f4f"/>
<rect x="185" y="343" width="3" height="3" fill="#2f4f4f"/>
<rect x="185" y="341" width="3" height="1" fill="#2f4f4f"/>
<rect x="191" y="337" width="3" height="3" fill="#2f4f4f"/>
<rect x="191" y="343" width="3" height="3" fill="#2f4f4f"/>
<rect x="191" y="341" width="3" height="1" fill="#2f4f4f"/>
<rect x="197" y="337" width="3" height="3" fill="#2f4f4f"/>
<rect x="197" y="343" width="3" height="3" fill="#2f4f4f"/>
<rect x="197" y="341" width="3" height="1" fill="#2f4f4f"/>
<rect x="203" y="337" width="3" height="3" fill="#2f4f4f"/>
<rect x="203" y="343" width="3" height="3" fill="#2f4f4f"/>
<rect x="203" y="341" width="3" height="1" fill="#2f4f4f"/>
<rect x="209" y="337" width="3" height="3" fill="#2f4f4f"/>
<rect x="209" y="343" width="3" height="3" fill="#2f4f4f"/>
<rect x="209" y="341" width="3" height="1" fill="#2f4f4f"/>
<rect x="215" y="337" width="3" height="3" fill="#2f4f4f"/>
<rect x="215" y="343" width="3" height="3" fill="#2f4f4f"/>
<rect x="215" y="341" width="3" height="1" fill="#2f4f4f"/>
<rect x="221" y="337" width="3" height="3" fill="#2f4f4f"/>
<rect x="221" y="343" width="3" height="3" fill="#2f4f4f"/>
<rect x="221" y="341" width="3" height="1" fill="#2f4f4f"/>
<rect x="227" y="337" width="3" height="3" fill="#2f4f4f"/>
<rect x="227" y="343" width="3" height="3" fill="#2f4f4f"/>
<rect x="227" y="341" width="3" height="1" fill="#2f4f4f"/>
<rect x="233" y="337" width="3" height="3" fill="#2f4f4f"/>
<rect x="233" y="343" width="3" height="3" fill="#2f4f4f"/>
<rect x="233" y="341" width="3" height="1" fill="#2f4f4f"/>
<rect x="239" y="337" width="3" height="3" fill="#2f4f4f"/>
<rect x="239" y="343" width="3" height="3" fill="#2f4f4f"/>
<rect x="239" y="341" width="3" height="1" fill="#2f4f4f"/>
<rect x="245" y="337" width="3" height="3" fill="#2f4f4f"/>
<rect x="245" y="343" width="3" height="3" fill="#2f4f4f"/>
<rect x="245" y="341" width="3" height="1" fill="#2f4f4f"/>
<rect x="251" y="337" width="3" height="3" fill="#2f4f4f"/>
<rect x="251" y="343" width="3" height="3" fill="#2f4f4f"/>
<rect x="251" y="341" width="3" height="1" fill="#2f4f4f"/>
<rect x="257" y="337" width="3" height="3" fill="#2f4f4f"/>
<rect x="257" y="343" width="3" height="3" fill="#2f4f4f"/>
<rect x="257" y="341" width="3" height="1" fill="#2f4f4f"/>
<rect x="263" y="337" width="3" height="3" fill="#2f4f4f"/>
<rect x="263" y="343" width="3" height="3" fill="#2f4f4f"/>
<rect x="263" y="341" width="3" height="1" fill="#2f4f4f"/>
<rect x="269" y="337" width="3" height="3" fill="#2f4f4f"/>
<rect x="269" y="343" width="3" height="3" fill="#2f4f4f"/>
<rect x="269" y="341" width="3" height="1" fill="#2f4f4f"/>
<rect x="275" y="337" width="3" height="3" fill="#2f4f4f"/>
<rect x="275" y="343" width="3" height="3" fill="#2f4f4f"/>
<rect x="275" y="341" width="3" height="1" fill="#2f4f4f"/>
<rect x="281" y="337" width="3" height="3" fill="#2f4f4f"/>
<rect x="281" y="343" width="3" height="3" fill="#2f4f4f"/>
<rect x="281" y="341" width="3" height="1" fill="#2f4f4f"/>
<rect x="287" y="337" width="3" height="3" fill="#2f4f4f"/>
<rect x="287" y="343" width="3" height="3" fill="#2f4f4f"/>
<rect x="287" y="341" width="3" height="1" fill="#2f4f4f"/>
<rect x="293" y="337" width="3" height="3" fill="#2f4f4f"/>
<rect x="293" y="343" width="3" height="3" fill="#2f4f4f"/>
<rect x="293" y="341" width="3" height="1" fill="#2f4f4f"/>
<rect x="299" y="337" width="3" height="3" fill="#2f4f4f"/>
<rect x="299" y="343" width="3" height="3" fill="#2f4f4f"/>
<rect x="299" y="341" width="3" height="1" fill="#2f4f4f"/>
<rect x="305" y="337" width="3" height="3" fill="#2f4f4f"/>
<rect x="305" y="343" width="3" height="3" fill="#2f4f4f"/>
<rect x="305" y="341" width="3" height="1" fill="#2f4f4f"/>
<rect x="311" y="337" width="3" height="3" fill="#2f4f4f"/>
<rect x="311" y="343" width="3" height="3" fill="#2f4f4f"/>
<rect x="311" y="341" width="3" height="1" fill="#2f4f4f"/>
<rect x="317" y="337" width="3" height="3" fill="#2f4f4f"/>
<rect x="317" y="343" width="3" height="3" fill="#2f4f4f"/>
<rect x="317" y="341" width="3" height="1" fill="#2f4f4f"/>
<rect x="323" y="337" width="3" height="3" fill="#2f4f4f"/>
<rect x="323" y="343" width="3" height="3" fill="#2f4f4f"/>
<rect x="323" y="341" width="3" height="1" fill="#2f4f4f"/>
<rect x="329" y="337" width="3" height="3" fill="#2f4f4f"/>
<rect x="329" y="343" width="3" height="3" fill="#2f4f4f"/>
<rect x="329" y="341" width="3" height="1" fill="#2f4f4f"/>
<rect x="335" y="337" width="3" height="3" fill="#2f4f4f"/>
<rect x="335" y="343" width="3" height="3" fill="#2f4f4f"/>
<rect x="335" y="341" width="3" height="1" fill="#2f4f4f"/>
<rect x="341" y="337" width="3" height="3" fill="#2f4f4f"/>
<rect x="341" y="343" width="3" height="3" fill="#2f4f4f"/>
<rect x="341" y="341" width="3" height="1" fill="#2f4f4f"/>
<rect x="347" y="337" width="3" height="3" fill="#2f4f4f"/>
<rect x="347" y="343" width="3" height="3" fill="#2f4f4f"/>
<rect x="347" y="341" width="3" height="1" fill="#2f4f4f"/>
<rect x="353" y="337" width="3" height="3" fill="#2f4f4f"/>
<rect x="353" y="343" width="3" height="3" fill="#2f4f4f"/>
<rect x="353" y="341" width="3" height="1" fill="#2f4f4f"/>
<rect x="359" y="337" width="3" height="3" fill="#2f4f4f"/>
<rect x="359" y="343" width="3" height="3" fill="#2f4f4f"/>
<rect x="359" y="341" width="3" height="1" fill="#2f4f4f"/>
<rect x="365" y="337" width="3" height="3" fill="#2f4f4f"/>
<rect x="365" y="343" width="3" height="3" fill="#2f4f4f"/>
<rect x="365" y="341" width="3" height="1" fill="#2f4f4f"/>
<rect x="371" y="337" width="3" height="3" fill="#2f4f4f"/>
<rect x="371" y="343" width="3" height="3" fill="#2f4f4f"/>
<rect x="371" y="341" width="3" height="1" fill="#2f4f4f"/>
<rect x="377" y="337" width="3" height="3" fill="#2f4f4f"/>
<rect x="377" y="343" width="3" height="3" fill="#2f4f4f"/>
<rect x="377" y="341" width="3" height="1" fill="#2f4f4f"/>
<rect x="383" y="337" width="3" height="3" fill="#2f4f4f"/>
<rect x="383" y="343" width="3" height="3" fill="#2f4f4f"/>
<rect x="383" y="341" width="3" height="1" fill="#2f4f4f"/>
<rect x="389" y="337" width="3" height="3" fill="#2f4f4f"/>
<rect x="389" y="343" width="3" height="3" fill="#2f4f4f"/>
<rect x="389" y="341" width="3" height="1" fill="#2f4f4f"/>
<rect x="395" y="337" width="3" height="3" fill="#2f4f4f"/>
<rect x="395" y="343" width="3" height="3" fill="#2f4f4f"/>
<rect x="395" y="341" width="3" height="1" fill="#2f4f4f"/>
<rect x="401" y="337" width="3" height="3" fill="#2f4f4f"/>
<rect x="401" y="343" width="3" height="3" fill="#2f4f4f"/>
<rect x="401" y="341" width="3" height="1" fill="#2f4f4f"/>
<rect x="407" y="337" width="3" height="3" fill="#2f4f4f"/>
<rect x="407" y="343" width="3" height="3" fill="#2f4f4f"/>
<rect x="407" y="341" width="3" height="1" fill="#2f4f4f"/>
<rect x="413" y="337" width="3" height="3" fill="#2f4f4f"/>
<rect x="413" y="343" width="3" height="3" fill="#2f4f4f"/>
<rect x="413" y="341" width="3" height="1" fill="#2f4f4f"/>
<rect x="419" y="337" width="3" height="3" fill="#2f4f4f"/>
<rect x="419" y="343" width="3" height="3" fill="#2f4f4f"/>
<rect x="419" y="341" width="3" height="1" fill="#2f4f4f"/>
<rect x="425" y="337" width="3" height="3" fill="#2f4f4f"/>
<rect x="425" y="343" width="3" height="3" fill="#2f4f4f"/>
<rect x="425" y="341" width="3" height="1" fill="#2f4f4f"/>
<rect x="431" y="337" width="3" height="3" fill="#2f4f4f"/>
<rect x="431" y="343" width="3" height="3" fill="#2f4f4f"/>
<rect x="431" y="341" width="3" height="1" fill="#2f4f4f"/>
<rect x="437" y="337" width="3" height="3" fill="#2f4f4f"/>
<rect x="437" y="343" width="3" height="3" fill="#2f4f4f"/>
<rect x="437" y="341" width="3" height="1" fill="#2f4f4f"/>
<rect x="443" y="337" width="3" height="3" fill="#2f4f4f"/>
<rect x="443" y="343" width="3" height="3" fill="#2f4f4f"/>
<rect x="443" y="341" width="3" height="1" fill="#2f4f4f"/>
<rect x="449" y="337" width="3" height="3" fill="#2f4f4f"/>
<rect x="449" y="343" width="3" height="3" fill="#2f4f4f"/>
<rect x="449" y="341" width="3" height="1" fill="#2f4f4f"/>
<rect x="455" y="337" width="3" height="3" fill="#2f4f4f"/>
<rect x="455" y="343" width="3" height="3" fill="#2f4f4f"/>
<rect x="455" y="341" width="3" height="1" fill="#2f4f4f"/>
<rect x="461" y="337" width="3" height="3" fill="#2f4f4f"/>
<rect x="461" y="343" width="3" height="3" fill="#2f4f4f"/>
<rect x="461" y="341" width="3" height="1" fill="#2f4f4f"/>
<rect x="467" y="337" width="3" height="3" fill="#2f4f4f"/>
<rect x="467" y="343" width="3" height="3" fill="#2f4f4f"/>
<rect x="467" y="341" width="3" height="1" fill="#2f4f4f"/>
<rect x="473" y="337" width="3" height="3" fill="#2f4f4f"/>
<rect x="473" y="343" width="3" height="3" fill="#2f4f4f"/>
<rect x="473" y="341" width="3" height="1" fill="#2f4f4f"/>
<rect x="479" y="337" width="3" height="3" fill="#2f4f4f"/>
<rect x="479" y="343" width="3" height="3" fill="#2f4f4f"/>
<rect x="479" y="341" width="3" height="1" fill="#2f4f4f"/>
<rect x="485" y="337" width="3" height="3" fill="#2f4f4f"/>
<rect x="485" y="343" width="3" height="3" fill="#2f4f4f"/>
<rect x="485" y="341" width="3" height="1" fill="#2f4f4f"/>
<rect x="491" y="337" width="3" height="3" fill="#2f4f4f"/>
<rect x="491" y="343" width="3" height="3" fill="#2f4f4f"/>
<rect x="491" y="341" width="3" height="1" fill="#2f4f4f"/>
<rect x="497" y="337" width="3" height="3" fill="#2f4f4f"/>
<rect x="497" y="343" width="3" height="3" fill="#2f4f4f"/>
<rect x="497" y="341" width="3" height="1" fill="#2f4f4f"/>
<rect x="503" y="337" width="3" height="3" fill="#2f4f4f"/>
<rect x="503" y="343" width="3" height="3" fill="#2f4f4f"/>
<rect x="503" y="341" width="3" height="1" fill="#2f4f4f"/>
<rect x="509" y="337" width="3" height="3" fill="#2f4f4f"/>
<rect x="509" y="343" width="3" height="3" fill="#2f4f4f"/>
<rect x="509" y="341" width="3" height="1" fill="#2f4f4f"/>
<rect x="515" y="337" width="3" height="3" fill="#2f4f4f"/>
<rect x="515" y="343" width="3" height="3" fill="#2f4f4f"/>
<rect x="515" y="341" width="3" height="1" fill="#2f4f4f"/>
<rect x="521" y="337" width="3" height="3" fill="#2f4f4f"/>
<rect x="521" y="343" width="3" height="3" fill="#2f4f4f"/>
<rect x="521" y="341" width="3" height="1" fill="#2f4f4f"/>
<rect x="527" y="337" width="3" height="3" fill="#2f4f4f"/>
<rect x="527" y="343" width="3" height="3" fill="#2f4f4f"/>
<rect x="527" y="341" width="3" height="1" fill="#2f4f4f"/>
<rect x="533" y="337" width="3" height="3" fill="#2f4f4f"/>
<rect x="533" y="343" width="3" height="3" fill="#2f4f4f"/>
<rect x="533" y="341" width="3" height="1" fill="#2f4f4f"/>
<rect x="539" y="337" width="3" height="3" fill="#2f4f4f"/>
<rect x="539" y="343" width="3" height="3" fill="#2f4f4f"/>
<rect x="539" y="341" width="3" height="1" fill="#2f4f4f"/>
<rect x="545" y="337" width="3" height="3" fill="#2f4f4f"/>
<rect x="545" y="343" width="3" height="3" fill="#2f4f4f"/>
<rect x="545" y="341" width="3" height="1" fill="#2f4f4f"/>
<rect x="551" y="337" width="3" height="3" fill="#2f4f4f"/>
<rect x="551" y="343" width="3" height="3" fill="#2f4f4f"/>
<rect x="551" y="341" width="3" height="1" fill="#2f4f4f"/>
<rect x="557" y="337" width="3" height="3" fill="#2f4f4f"/>
<rect x="557" y="343" width="3" height="3" fill="#2f4f4f"/>
<rect x="557" y="341" width="3" height="1" fill="#2f4f4f"/>
<rect x="563" y="337" width="3" height="3" fill="#2f4f4f"/>
<rect x="563" y="343" width="3" height="3" fill="#2f4f4f"/>
<rect x="563" y="341" width="3" height="1" fill="#2f4f4f"/>
<rect x="569" y="337" width="3" height="3" fill="#2f4f4f"/>
<rect x="569" y="343" width="3" height="3" fill="#2f4f4f"/>
<rect x="569" y="341" width="3" height="1" fill="#2f4f4f"/>
<rect x="575" y="337" width="3" height="3" fill="#2f4f4f"/>
<rect x="575" y="343" width="3" height="3" fill="#2f4f4f"/>
<rect x="575" y="341" width="3" height="1" fill="#2f4f4f"/>
<rect x="581" y="337" width="3" height="3" fill="#2f4f4f"/>
<rect x="581" y="343" width="3" height="3" fill="#2f4f4f"/>
<rect x="581" y="341" width="3" height="1" fill="#2f4f4f"/>
<rect x="587" y="337" width="3" height="3" fill="#2f4f4f"/>
<rect x="587" y="343" width="3" height="3" fill="#2f4f4f"/>
<rect x="587" y="341" width="3" height="1" fill="#2f4f4f"/>
<rect x="593" y="337" width="3" height="3" fill="#2f4f4f"/>
<rect x="593" y="343" width="3" height="3" fill="#2f4f4f"/>
<rect x="593" y="341" width="3" height="1" fill="#2f4f4f"/>
<rect x="599" y="337" width="3" height="3" fill="#2f4f4f"/>
<rect x="599" y="343" width="3" height="3" fill="#2f4f4f"/>
<rect x="599" y="341" width="3" height="1" fill="#2f4f4f"/>
<rect x="605" y="337" width="3" height="3" fill="#2f4f4f"/>
<rect x="605" y="343" width="3" height="3" fill="#2f4f4f"/>
<rect x="605" y="341" width="3" height="1" fill="#2f4f4f"/>
<rect x="611" y="337" width="3" height="3" fill="#2f4f4f"/>
<rect x="611" y="343" width="3" height="3" fill="#2f4f4f"/>
<rect x="611" y="341" width="3" height="1" fill="#2f4f4f"/>
<rect x="617" y="337" width="3" height="3" fill="#2f4f4f"/>
<rect x="617" y="343" width="3" height="3" fill="#2f4f4f"/>
<rect x="617" y="341" width="3" height="1" fill="#2f4f4f"/>
<rect x="623" y="337" width="3" height="3" fill="#2f4f4f"/>
<rect x="623" y="343" width="3" height="3" fill="#2f4f4f"/>
<rect x="623" y="341" width="3" height="1" fill="#2f4f4f"/>
<rect x="629" y="337" width="3" height="3" fill="#2f4f4f"/>
<rect x="629" y="343" width="3" height="3" fill="#2f4f4f"/>
<rect x="629" y="341" width="3" height="1" fill="#2f4f4f"/>
<rect x="635" y="337" width="3" height="3" fill="#2f4f4f"/>
<rect x="635" y="343" width="3" height="3" fill="#2f4f4f"/>
<rect x="635" y="341" width="3" height="1" fill="#2f4f4f"/>
<rect x="641" y="337" width="3" height="3" fill="#2f4f4f"/>
<rect x="641" y="343" width="3" height="3" fill="#2f4f4f"/>
<rect x="641" y="341" width="3" height="1" fill="#2f4f4f"/>
<rect x="647" y="337" width="3" height="3" fill="#2f4f4f"/>
<rect x="647" y="343" width="3" height="3" fill="#2f4f4f"/>
<rect x="647" y="341" width="3" height="1" fill="#2f4f4f"/>
<rect x="653" y="337" width="3" height="3" fill="#2f4f4f"/>
<rect x="653" y="343" width="3" height="3" fill="#2f4f4f"/>
<rect x="653" y="341" width="3" height="1" fill="#2f4f4f"/>
<rect x="659" y="337" width="3" height="3" fill="#2f4f4f"/>
<rect x="659" y="343" width="3" height="3" fill="#2f4f4f"/>
<rect x="659" y="341" width="3" height="1" fill="#2f4f4f"/>
<rect x="665" y="337" width="3" height="3" fill="#2f4f4f"/>
<rect x="665" y="343" width="3" height="3" fill="#2f4f4f"/>
<rect x="665" y="341" width="3" height="1" fill="#2f4f4f"/>
<rect x="671" y="337" width="3" height="3" fill="#2f4f4f"/>
<rect x="671" y="343" width="3" height="3" fill="#2f4f4f"/>
<rect x="671" y="341" width="3" height="1" fill="#2f4f4f"/>
<rect x="677" y="337" width="3" height="3" fill="#2f4f4f"/>
<rect x="677" y="343" width="3" height="3" fill="#2f4f4f"/>
<rect x="677" y="341" width="3" height="1" fill="#2f4f4f"/>
<rect x="683" y="337" width="3" height="3" fill="#2f4f4f"/>
<rect x="683" y="343" width="3" height="3" fill="#2f4f4f"/>
<rect x="683" y="341" width="3" height="1" fill="#2f4f4f"/>
<rect x="689" y="337" width="3" height="3" fill="#2f4f4f"/>
<rect x="689" y="343" width="3" height="3" fill="#2f4f4f"/>
<rect x="689" y="341" width="3" height="1" fill="#2f4f4f"/>
<rect x="695" y="337" width="3" height="3" fill="#2f4f4f"/>
<rect x="695" y="343" width="3" height="3" fill="#2f4f4f"/>
<rect x="695" y="341" width="3" height="1" fill="#2f4f4f"/>
<rect x="701" y="337" width="3" height="3" fill="#2f4f4f"/>
<rect x="701" y="343" width="3" height="3" fill="#2f4f4f"/>
<rect x="701" y="341" width="3" height="1" fill="#2f4f4f"/>
<rect x="707" y="337" width="3" height="3" fill="#2f4f4f"/>
<rect x="707" y="343" width="3" height="3" fill="#2f4f4f"/>
<rect x="707" y="341" width="3" height="1" fill="#2f4f4f"/>
<rect x="713" y="337" width="3" height="3" fill="#2f4f4f"/>
<rect x="713" y="343" width="3" height="3" fill="#2f4f4f"/>
<rect x="713" y="341" width="3" height="1" fill="#2f4f4f"/>
<rect x="719" y="337" width="3" height="3" fill="#2f4f4f"/>
<rect x="719" y="343" width="3" height="3" fill="#2f4f4f"/>
<rect x="719" y="341" width="3" height="1" fill="#2f4f4f"/>
<rect x="725" y="337" width="3" height="3" fill="#2f4f4f"/>
<rect x="725" y="343" width="3" height="3" fill="#2f4f4f"/>
<rect x="725" y="341" width="3" height="1" fill="#2f4f4f"/>
<rect x="731" y="337" width="3" height="3" fill="#2f4f4f"/>
<rect x="731" y="343" width="3" height="3" fill="#2f4f4f"/>
<rect x="731" y="341" width="3" height="1" fill="#2f4f4f"/>
<rect x="737" y="337" width="3" height="3" fill="#2f4f4f"/>
<rect x="737" y="343" width="3" height="3" fill="#2f4f4f"/>
<rect x="737" y="341" width="3" height="1" fill="#2f4f4f"/>
<rect x="743" y="337" width="3" height="3" fill="#2f4f4f"/>
<rect x="743" y="343" width="3" height="3" fill="#2f4f4f"/>
<rect x="743" y="341" width="3" height="1" fill="#2f4f4f"/>
<rect x="749" y="337" width="3" height="3" fill="#2f4f4f"/>
<rect x="749" y="343" width="3" height="3" fill="#2f4f4f"/>
<rect x="749" y="341" width="3" height="1" fill="#2f4f4f"/>
<rect x="755" y="337" width="3" height="3" fill="#2f4f4f"/>
<rect x="755" y="343" width="3" height="3" fill="#2f4f4f"/>
<rect x="755" y="341" width="3" height="1" fill="#2f4f4f"/>
<rect x="761" y="337" width="3" height="3" fill="#2f4f4f"/>
<rect x="761" y="343" width="3" height="3" fill="#2f4f4f"/>
<rect x="761" y="341" width="3" height="1" fill="#2f4f4f"/>
<rect x="767" y="337" width="3" height="3" fill="#2f4f4f"/>
<rect x="767" y="343" width="3" height="3" fill="#2f4f4f"/>
<rect x="767" y="341" width="3" height="1" fill="#2f4f4f"/>
<rect x="773" y="337" width="3" height="3" fill="#2f4f4f"/>
<rect x="773" y="343" width="3" height="3" fill="#2f4f4f"/>
<rect x="773" y="341" width="3" height="1" fill="#2f4f4f"/>
<rect x="779" y="337" width="3" height="3" fill="#2f4f4f"/>
<rect x="779" y="343" width="3" height="3" fill="#2f4f4f"/>
<rect x="779" y="341" width="3" height="1" fill="#2f4f4f"/>
<rect x="785" y="337" width="3" height="3" fill="#2f4f4f"/>
<rect x="785" y="343" width="3" height="3" fill="#2f4f4f"/>
<rect x="785" y="341" width="3" height="1" fill="#2f4f4f"/>
<rect x="791" y="337" width="3" height="3" fill="#2f4f4f"/>
<rect x="791" y="343" width="3" height="3" fill="#2f4f4f"/>
<rect x="791" y="341" width="3" height="1" fill="#2f4f4f"/>
<rect x="797" y="337" width="3" height="3" fill="#2f4f4f"/>
<rect x="797" y="343" width="3" height="3" fill="#2f4f4f"/>
<rect x="797" y="341" width="3" height="1" fill="#2f4f4f"/>
<rect x="803" y="337" width="3" height="3" fill="#2f4f4f"/>
<rect x="803" y="343" width="3" height="3" fill="#2f4f4f"/>
<rect x="803" y="341" width="3" height="1" fill="#2f4f4f"/>
<rect x="809" y="337" width="3" height="3" fill="#2f4f4f"/>
<rect x="809" y="343" width="3" height="3" fill="#2f4f4f"/>
<rect x="809" y="341" width="3" height="1" fill="#2f4f4f"/>
<rect x="815" y="337" width="3" height="3" fill="#2f4f4f"/>
<rect x="815" y="343" width="3" height="3" fill="#2f4f4f"/>
<rect x="815" y="341" width="3" height="1" fill="#2f4f4f"/>
<rect x="821" y="337" width="3" height="3" fill="#2f4f4f"/>
<rect x="821" y="343" width="3" height="3" fill="#2f4f4f"/>
<rect x="821" y="341" width="3" height="1" fill="#2f4f4f"/>
<rect x="827" y="337" width="3" height="3" fill="#2f4f4f"/>
<rect x="827" y="343" width="3" height="3" fill="#2f4f4f"/>
<rect x="827" y="341" width="3" height="1" fill="#2f4f4f"/>
<rect x="833" y="337" width="3" height="3" fill="#2f4f4f"/>
<rect x="833" y="343" width="3" height="3" fill="#2f4f4f"/>
<rect x="833" y="341" width="3" height="1" fill="#2f4f4f"/>
<rect x="839" y="337" width="3" height="3" fill="#2f4f4f"/>
<rect x="839" y="343" width="3" height="3" fill="#2f4f4f"/>
<rect x="839" y="341" width="3" height="1" fill="#2f4f4f"/>
<rect x="845" y="337" width="3" height="3" fill="#2f4f4f"/>
<rect x="845" y="343" width="3" height="3" fill="#2f4f4f"/>
<rect x="845" y="341" width="3" height="1" fill="#2f4f4f"/>
<rect x="851" y="337" width="3" height="3" fill="#2f4f4f"/>
<rect x="851" y="343" width="3" height="3" fill="#2f4f4f"/>
<rect x="851" y="341" width="3" height="1" fill="#2f4f4f"/>
<rect x="857" y="337" width="3" height="3" fill="#2f4f4f"/>
<rect x="857" y="343" width="3" height="3" fill="#2f4f4f"/>
<rect x="857" y="341" width="3" height="1" fill="#2f4f4f"/>
<rect x="863" y="337" width="3" height="3" fill="#2f4f4f"/>
<rect x="863" y="343" width="3" height="3" fill="#2f4f4f"/>
<rect x="863" y="341" width="3" height="1" fill="#2f4f4f"/>
<rect x="869" y="337" width="3" height="3" fill="#2f4f4f"/>
<rect x="869" y="343" width="3" height="3" fill="#2f4f4f"/>
<rect x="869" y="341" width="3" height="1" fill="#2f4f4f"/>
<rect x="875" y="337" width="3" height="3" fill="#2f4f4f"/>
<rect x="875" y="343" width="3" height="3" fill="#2f4f4f"/>
<rect x="875" y="341" width="3" height="1" fill="#2f4f4f"/>
<rect x="881" y="337" width="3" height="3" fill="#2f4f4f"/>
<rect x="881" y="343" width="3" height="3" fill="#2f4f4f"/>
<rect x="881" y="341" width="3" height="1" fill="#2f4f4f"/>
<rect x="887" y="337" width="3" height="3" fill="#2f4f4f"/>
<rect x="887" y="343" width="3" height="3" fill="#2f4f4f"/>
<rect x="887" y="341" width="3" height="1" fill="#2f4f4f"/>
<rect x="893" y="337" width="3" height="3" fill="#2f4f4f"/>
<rect x="893" y="343" width="3" height="3" fill="#2f4f4f"/>
<rect x="893" y="341" width="3" height="1" fill="#2f4f4f"/>
<rect x="899" y="337" width="3" height="3" fill="#2f4f4f"/>
<rect x="899" y="343" width="3" height="3" fill="#2f4f4f"/>
<rect x="899" y="341" width="3" height="1" fill="#2f4f4f"/>
<rect x="905" y="337" width="3" height="3" fill="#2f4f4f"/>
<rect x="905" y="343" width="3" height="3" fill="#2f4f4f"/>
<rect x="905" y="341" width="3" height="1" fill="#2f4f4f"/>
<rect x="911" y="337" width="3" height="3" fill="#2f4f4f"/>
<rect x="911" y="343" width="3" height="3" fill="#2f4f4f"/>
<rect x="911" y="341" width="3" height="1" fill="#2f4f4f"/>
<rect x="917" y="337" width="3" height="3" fill="#2f4f4f"/>
<rect x="917" y="343" width="3" height="3" fill="#2f4f4f"/>
<rect x="917" y="341" width="3" height="1" fill="#2f4f4f"/>
<rect x="923" y="337" width="3" height="3" fill="#2f4f4f"/>
<rect x="923" y="343" width="3" height="3" fill="#2f4f4f"/>
<rect x="923" y="341" width="3" height="1" fill="#2f4f4f"/>
<rect x="929" y="337" width="3" height="3" fill="#2f4f4f"/>
<rect x="929" y="343" width="3" height="3" fill="#2f4f4f"/>
<rect x="929" y="341" width="3" height="1" fill="#2f4f4f"/>
<rect x="935" y="337" width="3" height="3" fill="#2f4f4f"/>
<rect x="935" y="343" width="3" height="3" fill="#2f4f4f"/>
<rect x="935" y="341" width="3" height="1" fill="#2f4f4f"/>
<rect x="941" y="337" width="3" height="3" fill="#2f4f4f"/>
<rect x="941" y="343" width="3" height="3" fill="#2f4f4f"/>
<rect x="941" y="341" width="3" height="1" fill="#2f4f4f"/>
<rect x="947" y="337" width="3" height="3" fill="#2f4f4f"/>
<rect x="947" y="343" width="3" height="3" fill="#2f4f4f"/>
<rect x="947" y="341" width="3" height="1" fill="#2f4f4f"/>
<rect x="953" y="337" width="3" height="3" fill="#2f4f4f"/>
<rect x="953" y="343" width="3" height="3" fill="#2f4f4f"/>
<rect x="953" y="341" width="3" height="1" fill="#2f4f4f"/>
<rect x="959" y="337" width="3" height="3" fill="#2f4f4f"/>
<rect x="959" y="343" width="3" height="3" fill="#2f4f4f"/>
<rect x="959" y="341" width="3" height="1" fill="#2f4f4f"/>
<rect x="965" y="337" width="3" height="3" fill="#2f4f4f"/>
<rect x="965" y="343" width="3" height="3" fill="#2f4f4f"/>
<rect x="965" y="341" width="3" height="1" fill="#2f4f4f"/>
<rect x="971" y="337" width="3" height="3" fill="#2f4f4f"/>
<rect x="971" y="343" width="3" height="3" fill="#2f4f4f"/>
<rect x="971" y="341" width="3" height="1" fill="#2f4f4f"/>
<polyline points="9,336 65,336 80,337 95,338 110,337 125,338 145,337 165,338 195,338 205,340 220,342 235,344 245,343 255,341 265,340 275,339 285,336 335,336 345,338 365,339 370,340 377,342 385,343 455,343 460,342 467,340 475,338 481,336 515,336 520,339 527,341 535,343 595,344 603,342 611,340 625,339 655,338 665,340 675,342 685,343 705,342 717,341 727,339 745,338 755,336 795,336 800,339 805,342 810,344 865,344 871,342 877,340 885,339 975,338" fill="none" stroke="#ff0000" stroke-width="1" stroke-dasharray="2 6" transform="translate(0.5,1.5)"/>
<polyline points="4,336 60,336 75,337 90,338 105,337 120,338 140,337 160,338 190,338 200,340 215,342 230,344 240,343 250,341 260,340 270,339 280,336 330,336 340,338 360,339 365,340 372,342 380,343 450,343 455,342 462,340 470,338 476,336 510,336 515,339 522,341 530,343 590,344 598,342 606,340 620,339 650,338 660,340 670,342 680,343 700,342 712,341 722,339 740,338 750,336 790,336 795,339 800,342 805,344 860,344 866,342 872,340 880,339 970,338" fill="none" stroke="#32cd32" stroke-width="1" transform="translate(0.5,0.5)"/>
<clipPath id="jc"><rect x="4" y="349" width="974" height="196"/></clipPath><g clip-path="url(#jc)">
<path d="M4 486.5h19M23 485.5h3M26 484.5h3M29 485.5h1M30 486.5h1M31 487.5h1M32.5 488v2M33 490.5h1M34 491.5h1M35 492.5h1M36 493.5h2M38 492.5h1M39 491.5h3M42 490.5h1M43 489.5h4M47 490.5h3M50 491.5h7M57 492.5h4M61 493.5h2M63 494.5h2M65 495.5h1M66 496.5h2M68 497.5h2M70 498.5h1M71 499.5h3M74 500.5h1M75 501.5h3M78 502.5h2M80 503.5h3M83 504.5h10M93 503.5h1M94 502.5h2M96 501.5h1M97 500.5h2M99 499.5h1M100 498.5h3M103 499.5h3M106 500.5h3M109 501.5h1M110 502.5h1M111 503.5h1M112 504.5h1M113 505.5h1M114 506.5h1M115 507.5h1M116 508.5h1M117 507.5h1M118 506.5h1M119 505.5h1M120 504.5h2M122 503.5h1M123 502.5h1M124 501.5h5M129 502.5h8M137 501.5h6M143 502.5h3M146 503.5h4M150 502.5h2M152 501.5h3M155 500.5h2M157.5 498v2M158 497.5h1M159 496.5h1M160.5 494v2M161 493.5h1M162 492.5h1M163.5 490v2M164 489.5h3M167 488.5h3M170 487.5h7M177 488.5h4M181 487.5h1M182 486.5h2M184 485.5h1M185 484.5h2M187 483.5h1M188 482.5h5M193 483.5h5M198 484.5h1M199 485.5h3M202 486.5h1M203 487.5h2M205 488.5h2M207 489.5h2M209 490.5h1M210 491.5h2M212 492.5h3M215 493.5h3M218 494.5h3M221 495.5h1M222 496.5h1M223 497.5h1M224 498.5h1M225 499.5h1M226 500.5h1M227 501.5h1M228 502.5h1M229 503.5h1M230 504.5h1M231 505.5h1M232 506.5h1M233 507.5h1M234 508.5h1M235 509.5h1M236.5 510v2M237.5 512v2M238.5 514v2M239.5 516v2M240.5 518v2M241.5 520v2M242.5 522v2M243.5 524v2M244.5 526v2M245 527.5h4M249 528.5h4M253 527.5h1M254 526.5h1M255 525.5h1M256 524.5h2M258 523.5h1M259 522.5h1M260 521.5h5M265 520.5h5M270 521.5h1M271 522.5h3M274 523.5h1M275 524.5h2M276 523.5h1M277 522.5h1M278.5 519v3M279 518.5h1M280.5 515v3M281 514.5h1M282.5 511v3M283 510.5h1M284.5 508v2M285 509.5h1M286 510.5h2M288 511.5h1M289 512.5h2M291 513.5h1M292 514.5h9M301 515.5h1M302 516.5h2M304 517.5h1M305 518.5h2M307 519.5h1M308 520.5h10M318 519.5h1M319 518.5h3M322 517.5h1M323 516.5h4M327 515.5h3M330 514.5h4M334 515.5h2M336 516.5h3M339 517.5h6M345 518.5h5M350 519.5h2M352 520.5h3M355 521.5h6M361 522.5h5M366 521.5h1M367 520.5h3M370 519.5h1M371 518.5h2M373.5 516v2M374 515.5h1M375.5 513v2M376 512.5h1M377.5 510v2M378 509.5h1M379.5 507v2M380 506.5h5M385 507.5h5M390 508.5h2M392 509.5h3M395 510.5h4M399 509.5h3M402 508.5h7M409 509.5h4M413.5 510v2M414.5 512v2M415 514.5h1M416.5 515v2M417 517.5h1M418.5 518v2M419.5 520v2M420 522.5h1M421 523.5h1M422 524.5h2M424 525.5h1M425 526.5h2M427 527.5h1M428 528.5h2M430 529.5h1M431 530.5h3M434 531.5h1M435 532.5h2M436 531.5h1M437.5 529v2M438.5 527v2M439.5 525v2M440.5 522v3M441.5 520v2M442.5 518v2M443.5 516v2M444.5 514v2M445 514.5h1M446 515.5h2M448 516.5h3M451 517.5h3M454 518.5h2M456 519.5h3M459 520.5h2M461 519.5h2M463 518.5h2M465 517.5h1M466 516.5h2M468 515.5h13M481 514.5h4M485 513.5h2M487 512.5h2M489 511.5h1M490 510.5h2M492 509.5h5M497 508.5h4M500 507.5h1M501 506.5h1M502.5 503v3M503 502.5h1M504.5 499v3M505 498.5h1M506.5 495v3M507 494.5h1M508.5 492v2M509 491.5h1M510 490.5h2M512 489.5h1M513 488.5h2M515 487.5h1M516 486.5h1M517 487.5h1M518 488.5h1M519 489.5h1M520.5 490v2M521 492.5h1M522 493.5h1M523 494.5h1M524 495.5h1M525.5 493v2M526.5 491v2M527.5 489v2M528 488.5h1M529.5 486v2M530.5 484v2M531.5 482v2M532 481.5h1M533 480.5h2M535 479.5h2M537 478.5h1M538 477.5h2M540 476.5h2M542 475.5h2M544 474.5h3M547 473.5h10M557.5 474v2M558.5 476v2M559.5 478v2M560.5 480v2M561.5 482v2M562.5 484v2M563.5 486v2M564 488.5h1M565 489.5h1M566 490.5h2M568 491.5h1M569 492.5h2M571 493.5h1M572 494.5h3M575 493.5h3M578 492.5h5M583 493.5h3M586 494.5h3M589 495.5h1M590 496.5h2M592 497.5h1M593 498.5h2M595 499.5h1M596 500.5h2M598 499.5h2M600 498.5h3M603 497.5h2M605.5 495v2M606 494.5h1M607 493.5h1M608.5 491v2M609 490.5h1M610 489.5h1M611.5 487v2M612 486.5h3M615 485.5h3M618 484.5h3M621.5 482v2M622.5 480v2M623.5 478v2M624.5 476v2M625.5 474v2M626.5 472v2M627.5 470v2M628 469.5h5M633 468.5h4M637 469.5h1M638 470.5h2M640 471.5h1M641 472.5h2M643 473.5h1M644 474.5h1M645 473.5h1M646 472.5h2M648 471.5h1M649 470.5h2M651 469.5h1M652 468.5h1M653 469.5h1M654.5 470v2M655 472.5h1M656 473.5h1M657 474.5h1M658.5 475v2M659 477.5h1M660 478.5h1M661 477.5h1M662 476.5h2M664 475.5h1M665 474.5h2M667 473.5h1M668 472.5h5M673 471.5h4M677.5 472v2M678.5 474v2M679 476.5h1M680.5 477v2M681 479.5h1M682.5 480v2M683.5 482v2M684 484.5h1M685.5 482v2M686.5 480v2M687.5 478v2M688 477.5h1M689.5 475v2M690.5 473v2M691.5 471v2M692 470.5h1M693 469.5h1M694 468.5h2M696 467.5h1M697 466.5h2M699 465.5h1M700 464.5h3M703 465.5h3M706 466.5h20M726 465.5h1M727 464.5h3M730 463.5h1M731 462.5h2M733 463.5h2M735 464.5h2M737 465.5h1M738 466.5h2M740 467.5h1M741 466.5h2M743 465.5h2M745 464.5h1M746 463.5h2M748 462.5h3M751 463.5h3M754 464.5h11M765.5 462v2M766 461.5h1M767 460.5h1M768.5 458v2M769 457.5h1M770 456.5h1M771.5 454v2M772 453.5h1M773 452.5h1M774 451.5h2M776 450.5h1M777 449.5h2M779 448.5h1M780.5 447v2M781.5 449v2M782.5 451v2M783.5 453v2M784.5 455v3M785.5 458v2M786.5 460v2M787.5 462v2M788.5 464v2M789 465.5h2M791 464.5h3M794 463.5h7M801 462.5h4M804 461.5h1M805 460.5h1M806.5 457v3M807 456.5h1M808.5 453v3M809 452.5h1M810.5 449v3M811 448.5h1M812.5 446v2M813 446.5h1M814 447.5h2M816 448.5h3M819 449.5h2M821 450.5h1M822 451.5h1M823 452.5h1M824 453.5h2M826 454.5h1M827 455.5h1M828 456.5h1M829 457.5h2M831 458.5h2M833 459.5h1M834 460.5h2M836 461.5h1M837 462.5h1M838 463.5h2M840 464.5h1M841 465.5h2M843 466.5h1M844 467.5h1M845 466.5h2M847 465.5h2M849 464.5h1M850 463.5h2M852 462.5h1M853 463.5h2M855 464.5h2M857 465.5h1M858 466.5h2M860 467.5h2M862 466.5h2M864 465.5h3M867 464.5h3M870 463.5h2M872 462.5h3M875 461.5h14M889 460.5h4M893 459.5h1M894 458.5h2M896 457.5h1M897 456.5h2M899 455.5h1M900 454.5h1M901 453.5h1M902 452.5h2M904 451.5h1M905 450.5h2M907 449.5h1M908 448.5h3M911 447.5h3M914 446.5h3M917 447.5h2M919 448.5h2M921 449.5h1M922 450.5h2M924.5 451v2M925.5 453v2M926.5 455v2M927.5 457v2M928.5 459v2M929.5 461v2M930.5 463v2M931.5 465v2M932.5 467v2M933 468.5h1M934 467.5h2M936 466.5h3M939 465.5h2M941 466.5h1M942 467.5h2M944 468.5h1M945 469.5h2M947 470.5h1M948 471.5h1M949 470.5h1M950 469.5h1M951 468.5h1M952 467.5h2M954 466.5h1M955 465.5h1M956 464.5h2M958 463.5h1M959 462.5h3M962 461.5h1M963 460.5h2M965 459.5h1M966 458.5h1M967 457.5h1M968 456.5h2M970 455.5h1M971 454.5h1M972 453.5h1" fill="none" stroke="#c0c0c0" stroke-width="1"/>
<path d="M4 461.5h2M6 462.5h1M7 463.5h3M10 464.5h1M11 465.5h11M22 466.5h1M23 467.5h3M26 468.5h1M27 469.5h2M29.5 470v2M30 472.5h1M31 473.5h1M32.5 474v2M33 476.5h1M34 477.5h1M35.5 478v2M36 480.5h2M38 481.5h1M39 482.5h3M42 483.5h1M43 484.5h4M47 485.5h3M50 486.5h3M53 487.5h1M54.5 488v2M55 490.5h1M56 491.5h1M57 492.5h1M58.5 493v2M59 495.5h1M60 496.5h1M61 497.5h2M63 498.5h2M65 499.5h1M66 500.5h2M68 501.5h1M69.5 502v2M70.5 504v2M71.5 506v2M72 508.5h1M73.5 509v2M74.5 511v2M75.5 513v2M76 515.5h1M77 514.5h1M78 513.5h1M79 512.5h1M80 511.5h1M81 510.5h1M82 509.5h1M83 508.5h1M84 507.5h1M85 506.5h2M87 505.5h2M89 504.5h1M90 503.5h2M92 502.5h1M93.5 500v2M94 499.5h1M95 498.5h1M96.5 496v2M97 495.5h1M98 494.5h1M99.5 492v2M100 491.5h5M105 490.5h4M109 489.5h1M110.5 487v2M111 486.5h1M112 485.5h1M113 484.5h1M114.5 482v2M115 481.5h1M116 480.5h2M118 481.5h1M119 482.5h3M122 483.5h1M123 484.5h2M125 485.5h1M126 486.5h1M127 487.5h1M128 488.5h2M130 489.5h1M131 490.5h1M132 491.5h3M135 492.5h3M138 493.5h3M141 492.5h2M143 491.5h2M145 490.5h1M146 489.5h2M148 488.5h2M150 487.5h1M151 486.5h3M154 485.5h1M155 484.5h2M157 485.5h2M159 486.5h2M161 487.5h1M162 488.5h2M164 489.5h9M173 488.5h1M174.5 486v2M175 485.5h1M176 484.5h1M177 483.5h1M178.5 481v2M179 480.5h1M180 479.5h2M182 478.5h1M183 477.5h3M186 476.5h1M187 475.5h3M190 476.5h2M192 477.5h3M195 478.5h3M198 479.5h1M199 480.5h3M202 481.5h1M203 482.5h2M204 481.5h1M205 480.5h1M206.5 477v3M207 476.5h1M208.5 473v3M209 472.5h1M210.5 469v3M211 468.5h1M212.5 466v2M213 466.5h1M214 467.5h1M215 468.5h3M218 469.5h1M219 470.5h2M221 471.5h1M222 472.5h1M223 473.5h1M224 474.5h2M226 475.5h1M227 476.5h1M228.5 477v2M229 479.5h1M230.5 480v3M231 483.5h1M232.5 484v3M233 487.5h1M234.5 488v3M235 491.5h1M236.5 492v2M237.5 494v2M238.5 496v2M239.5 498v2M240 500.5h1M241.5 501v2M242.5 503v2M243.5 505v2M244.5 507v2M245.5 509v3M246.5 512v3M247.5 515v3M248.5 518v2M249.5 520v3M250.5 523v3M251.5 526v3M252.5 529v2M253 529.5h1M254 528.5h2M256 527.5h1M257 526.5h2M259 525.5h1M260 524.5h1M261 525.5h1M262 526.5h1M263 527.5h1M264.5 528v2M265 530.5h1M266 531.5h1M267 532.5h1M268 533.5h2M270 534.5h2M272 535.5h3M275 536.5h2M276 535.5h1M277.5 533v2M278.5 531v2M279.5 529v2M280.5 527v2M281.5 525v2M282.5 523v2M283.5 521v2M284.5 519v2M285 519.5h4M289 520.5h4M293 519.5h1M294 518.5h1M295 517.5h1M296 516.5h2M298 515.5h1M299 514.5h1M300 513.5h1M301 512.5h1M302 511.5h1M303 510.5h1M304.5 508v2M305 507.5h1M306 506.5h1M307 505.5h1M308 504.5h1M309.5 505v2M310 507.5h1M311 508.5h1M312.5 509v2M313 511.5h1M314 512.5h1M315.5 513v2M316 515.5h1M317 514.5h1M318 513.5h2M320 512.5h1M321 511.5h2M323 510.5h1M324 509.5h5M329 508.5h4M333.5 506v2M334 505.5h1M335 504.5h1M336.5 502v2M337 501.5h1M338 500.5h1M339.5 498v2M340 497.5h5M345 496.5h4M349 497.5h1M350 498.5h2M352 499.5h1M353 500.5h2M355 501.5h1M356 502.5h2M358 503.5h1M359 504.5h3M362 505.5h1M363 506.5h3M366 507.5h1M367 508.5h3M370 509.5h1M371 510.5h4M375 511.5h3M378 512.5h4M382 511.5h1M383 510.5h3M386 509.5h1M387 508.5h6M393 507.5h4M396 506.5h1M397.5 504v2M398.5 502v2M399.5 499v3M400.5 497v2M401.5 494v3M402.5 492v2M403.5 490v2M404.5 488v2M405 488.5h2M407 489.5h3M410 490.5h15M425 489.5h5M430 490.5h1M431 491.5h3M434 492.5h1M435 493.5h2M437.5 494v2M438.5 496v2M439 498.5h1M440.5 499v2M441 501.5h1M442.5 502v2M443.5 504v2M444 506.5h2M446 507.5h1M447 508.5h3M450 509.5h1M451 510.5h6M457 509.5h20M477 510.5h1M478 511.5h1M479 512.5h1M480 513.5h1M481 514.5h1M482 515.5h1M483 516.5h1M484 517.5h1M485.5 518v2M486 520.5h1M487.5 521v2M488 523.5h1M489.5 524v2M490 526.5h1M491.5 527v2M492.5 528v2M493.5 525v3M494.5 522v3M495.5 519v3M496.5 517v2M497.5 514v3M498.5 511v3M499.5 508v3M500.5 506v2M501.5 504v2M502 503.5h1M503.5 501v2M504 500.5h1M505.5 498v2M506 497.5h1M507.5 495v2M508 494.5h5M513 495.5h8M521 496.5h4M525 495.5h1M526 494.5h2M528 493.5h1M529 492.5h2M531 491.5h1M532 490.5h11M543 489.5h3M546 488.5h12M558 487.5h2M560 486.5h3M563 485.5h2M565 484.5h1M566 483.5h2M568 482.5h1M569 481.5h2M571 480.5h1M572 479.5h5M577 480.5h5M582 481.5h1M583 482.5h3M586 483.5h1M587 484.5h2M589 485.5h1M590 486.5h2M592 487.5h1M593 488.5h2M595 489.5h1M596 490.5h5M601 491.5h6M607 492.5h3M610 493.5h3M613 494.5h1M614.5 495v2M615 497.5h1M616 498.5h1M617 499.5h1M618.5 500v2M619 502.5h1M620 503.5h1M621.5 504v2M622 506.5h1M623 507.5h1M624.5 508v2M625 510.5h1M626 511.5h1M627.5 512v2M628 514.5h1M629.5 512v2M630 511.5h1M631 510.5h1M632.5 508v2M633 507.5h1M634 506.5h1M635.5 504v2M636 503.5h1M637.5 501v2M638.5 499v2M639 498.5h1M640.5 496v2M641 495.5h1M642.5 493v2M643.5 491v2M644 490.5h3M647 489.5h3M650 488.5h3M653.5 486v2M654.5 484v2M655.5 482v2M656 481.5h1M657.5 479v2M658.5 477v2M659.5 475v2M660 474.5h3M663 473.5h3M666 472.5h3M669 471.5h1M670.5 469v2M671 468.5h1M672 467.5h1M673 466.5h1M674.5 464v2M675 463.5h1M676 462.5h2M678 463.5h1M679 464.5h3M682 465.5h1M683 466.5h2M685 467.5h1M686 468.5h1M687 469.5h1M688 470.5h1M689 471.5h1M690 472.5h1M691 473.5h1M692 474.5h1M693 473.5h1M694.5 471v2M695 470.5h1M696 469.5h1M697 468.5h1M698.5 466v2M699 465.5h1M700 464.5h10M710 465.5h1M711 466.5h3M714 467.5h1M715 468.5h4M719 467.5h3M722 466.5h3M725.5 464v2M726 463.5h1M727.5 461v2M728 460.5h1M729.5 458v2M730 457.5h1M731.5 455v2M732 454.5h2M734 455.5h1M735 456.5h3M738 457.5h1M739 458.5h3M742 457.5h2M744 456.5h3M747 455.5h2M749 456.5h2M751 457.5h2M753 458.5h1M754 459.5h2M756 460.5h2M758 461.5h1M759 462.5h3M762 463.5h1M763 464.5h2M765 463.5h2M767 462.5h2M769 461.5h1M770 460.5h2M772 459.5h1M773 458.5h1M774 457.5h2M776 456.5h1M777 455.5h2M779 454.5h1M780 453.5h3M783 452.5h3M786 451.5h5M791 450.5h3M794 449.5h7M801 448.5h4M805 449.5h1M806 450.5h1M807 451.5h1M808 452.5h2M810 453.5h1M811 454.5h1M812 455.5h1M813 454.5h1M814 453.5h2M816 452.5h1M817 451.5h2M819 450.5h1M820 449.5h2M822 448.5h1M823 447.5h3M826 446.5h1M827 445.5h2M828 444.5h1M829 443.5h1M830.5 440v3M831 439.5h1M832.5 436v3M833 435.5h1M834.5 432v3M835 431.5h1M836.5 429v2M837 429.5h2M839 428.5h3M842 427.5h5M847 428.5h3M850 429.5h3M853 430.5h1M854.5 431v2M855 433.5h1M856 434.5h1M857 435.5h1M858.5 436v2M859 438.5h1M860 439.5h1M861 438.5h2M863 437.5h2M865 436.5h1M866 435.5h2M868 434.5h1M869 433.5h2M871 432.5h2M873 431.5h1M874 430.5h2M876 429.5h5M881 430.5h5M886 429.5h2M888 428.5h3M891 427.5h3M894 428.5h1M895 429.5h3M898 430.5h1M899 431.5h6M905 430.5h8M913 431.5h13M926 430.5h1M927 429.5h3M930 428.5h1M931 427.5h4M935 426.5h3M938 425.5h3M941 426.5h1M942 427.5h1M943 428.5h1M944.5 429v2M945 431.5h1M946 432.5h1M947 433.5h1M948 434.5h1M949.5 435v2M950.5 437v2M951.5 439v2M952.5 441v2M953.5 443v2M954.5 445v2M955.5 447v2M956 449.5h1M957 450.5h1M958.5 451v2M959 453.5h1M960 454.5h1M961 455.5h1M962.5 456v2M963 458.5h1M964 459.5h1M965 458.5h1M966 457.5h2M968 456.5h1M969 455.5h2M971 454.5h1M972 453.5h1" fill="none" stroke="#32cd32" stroke-width="1"/>
<path d="M4 454.5h1M5 455.5h1M6 456.5h1M7 457.5h1M8 458.5h2M10 459.5h1M11 460.5h1M12 461.5h1M13 460.5h2M15 459.5h2M17 458.5h1M18 457.5h2M20 456.5h5M25 455.5h5M30 456.5h2M32 457.5h3M35 458.5h6M41 459.5h4M45.5 460v2M46.5 462v2M47.5 464v2M48.5 466v2M49.5 468v2M50.5 470v2M51.5 472v2M52 474.5h3M55 475.5h3M58 476.5h4M62 477.5h1M63 478.5h3M66 479.5h1M67 480.5h3M70 481.5h1M71 482.5h3M74 483.5h1M75 484.5h4M79 483.5h3M82 482.5h4M86 481.5h1M87 480.5h3M90 479.5h1M91 478.5h4M95 479.5h3M98 480.5h4M102 479.5h1M103 478.5h3M106 477.5h1M107 476.5h3M110 477.5h1M111 478.5h3M114 479.5h1M115 480.5h4M119 481.5h3M122 482.5h4M126 483.5h1M127 484.5h3M130 485.5h1M131 486.5h6M137 485.5h5M142 484.5h1M143 483.5h3M146 482.5h1M147 481.5h6M153 482.5h6M159 483.5h3M162 484.5h3M165 483.5h1M166 482.5h2M168 481.5h1M169 480.5h2M171 479.5h1M172 478.5h1M173.5 476v2M174 475.5h1M175 474.5h1M176.5 472v2M177 471.5h1M178 470.5h1M179.5 468v2M180 467.5h5M185 468.5h5M190 469.5h2M192 470.5h3M195 471.5h2M197.5 469v2M198.5 467v2M199.5 465v2M200.5 463v2M201.5 461v2M202.5 459v2M203.5 457v2M204 456.5h3M207 455.5h3M210 454.5h3M213.5 455v2M214.5 457v2M215.5 459v2M216 461.5h1M217.5 462v2M218.5 464v2M219.5 466v2M220 468.5h1M221 469.5h1M222 470.5h2M224 471.5h1M225 472.5h2M227 473.5h1M228 474.5h5M233 475.5h4M236 476.5h1M237.5 477v2M238.5 479v3M239.5 482v2M240.5 484v3M241.5 487v2M242.5 489v3M243.5 492v2M244.5 494v2M245 495.5h4M249 494.5h4M253.5 495v2M254 497.5h1M255 498.5h1M256.5 499v2M257 501.5h1M258 502.5h1M259.5 503v2M260 505.5h1M261 506.5h1M262.5 507v2M263 509.5h1M264 510.5h1M265 511.5h1M266.5 512v2M267 514.5h1M268 515.5h1M269.5 513v2M270.5 511v2M271 510.5h1M272.5 508v2M273 507.5h1M274.5 505v2M275.5 503v2M276 502.5h1M277 503.5h1M278 504.5h1M279 505.5h1M280 506.5h2M282 507.5h1M283 508.5h1M284 509.5h9M292 508.5h1M293.5 506v2M294.5 504v2M295.5 502v2M296.5 499v3M297.5 497v2M298.5 495v2M299.5 493v2M300.5 491v2M301.5 492v2M302 494.5h1M303 495.5h1M304.5 496v2M305 498.5h1M306 499.5h1M307.5 500v2M308 502.5h1M309 501.5h1M310 500.5h1M311 499.5h1M312 498.5h1M313 497.5h1M314 496.5h1M315 495.5h1M316 494.5h1M317 495.5h1M318 496.5h1M319 497.5h1M320.5 498v2M321 500.5h1M322 501.5h1M323 502.5h1M324.5 502v2M325 501.5h1M326.5 498v3M327 497.5h1M328.5 494v3M329 493.5h1M330.5 490v3M331 489.5h1M332.5 487v2M333 487.5h1M334 486.5h2M336 485.5h3M339 484.5h6M345 483.5h8M353 484.5h6M359 485.5h3M362 486.5h7M369 487.5h5M374 488.5h2M376 489.5h3M379 490.5h4M383 489.5h3M386 488.5h3M388 487.5h1M389 486.5h1M390.5 483v3M391 482.5h1M392.5 479v3M393 478.5h1M394.5 475v3M395 474.5h1M396.5 472v2M397 471.5h1M398 470.5h1M399 469.5h1M400 468.5h2M402 467.5h1M403 466.5h1M404 465.5h3M407 466.5h3M410 467.5h3M413 468.5h1M414 469.5h1M415 470.5h1M416.5 471v2M417 473.5h1M418 474.5h1M419 475.5h1M420 476.5h1M421 477.5h1M422 478.5h2M424 479.5h1M425 480.5h2M427 481.5h1M428 482.5h5M433 483.5h4M437 484.5h1M438 485.5h2M440 486.5h1M441 487.5h2M443 488.5h1M444 489.5h1M445 490.5h1M446 491.5h1M447 492.5h1M448 493.5h1M449 494.5h1M450 495.5h1M451 496.5h1M452 497.5h1M453 496.5h1M454 495.5h1M455 494.5h1M456.5 492v2M457 491.5h1M458 490.5h1M459 489.5h1M460 488.5h2M462 487.5h2M464 486.5h3M467 485.5h2M469 486.5h1M470 487.5h1M471 488.5h1M472 489.5h1M473 490.5h1M474 491.5h1M475 492.5h1M476 493.5h2M478 492.5h1M479 491.5h3M482 490.5h1M483 489.5h2M485 488.5h1M486 487.5h1M487 486.5h1M488 485.5h2M490 484.5h1M491 483.5h1M492 482.5h3M495 483.5h3M498 484.5h4M502 485.5h1M503 486.5h3M506 487.5h1M507 488.5h4M511 487.5h3M514 486.5h3M517 485.5h1M518 484.5h1M519 483.5h1M520 482.5h2M522 481.5h1M523 480.5h1M524 479.5h1M525 478.5h2M527 477.5h2M529 476.5h1M530 475.5h2M532 474.5h3M535 473.5h3M538 472.5h3M540 471.5h1M541.5 468v3M542.5 466v2M543.5 463v3M544.5 460v3M545.5 457v3M546.5 455v2M547.5 452v3M548.5 450v2M549 450.5h2M551 451.5h3M554 452.5h3M557 453.5h1M558 454.5h2M560 455.5h1M561 456.5h2M563 457.5h1M564 458.5h1M565 459.5h1M566 460.5h1M567 461.5h1M568 462.5h1M569 463.5h1M570 464.5h1M571 465.5h1M572 466.5h2M574 467.5h2M576 468.5h3M579 469.5h2M581.5 470v2M582 472.5h1M583.5 473v2M584 475.5h1M585.5 476v2M586 478.5h1M587.5 479v2M588 481.5h2M590 480.5h1M591 479.5h3M594 478.5h1M595 477.5h2M597.5 478v2M598 480.5h1M599 481.5h1M600.5 482v2M601 484.5h1M602 485.5h1M603.5 486v2M604 488.5h1M605 489.5h2M607 490.5h2M609 491.5h1M610 492.5h2M612 493.5h1M613 494.5h1M614 495.5h1M615 496.5h1M616 497.5h2M618 498.5h1M619 499.5h1M620 500.5h2M622 499.5h1M623 498.5h3M626 497.5h1M627 496.5h2M628 495.5h1M629.5 493v2M630.5 490v3M631.5 488v2M632.5 485v3M633.5 483v2M634.5 480v3M635.5 478v2M636.5 476v2M637.5 477v2M638 479.5h1M639.5 480v2M640 482.5h1M641.5 483v2M642 485.5h1M643.5 486v2M644.5 487v2M645.5 484v3M646.5 481v3M647.5 478v3M648.5 475v3M649.5 472v3M650.5 469v3M651.5 466v3M652.5 464v2M653 465.5h1M654 466.5h2M656 467.5h1M657 468.5h2M659 469.5h1M660 470.5h2M662 471.5h2M664 472.5h3M667 473.5h2M669 474.5h1M670 475.5h1M671 476.5h1M672 477.5h2M674 478.5h1M675 479.5h1M676 480.5h2M678 479.5h1M679 478.5h3M682 477.5h1M683 476.5h2M685 475.5h2M687 474.5h2M689 473.5h1M690 472.5h2M692 471.5h2M694 472.5h2M696 473.5h3M699 474.5h2M701 475.5h1M702 476.5h2M704 477.5h1M705 478.5h2M707 479.5h1M708 480.5h1M709 481.5h1M710 482.5h2M712 483.5h1M713 484.5h2M715 485.5h1M716 486.5h3M719 487.5h3M722 488.5h7M729 487.5h8M737 486.5h4M741 485.5h2M743 484.5h2M745 483.5h1M746 482.5h2M748 481.5h1M749 482.5h1M750 483.5h1M751 484.5h1M752 485.5h2M754 486.5h1M755 487.5h1M756 488.5h1M757 487.5h1M758 486.5h1M759 485.5h1M760 484.5h2M762 483.5h1M763 482.5h1M764 481.5h1M765.5 479v2M766 478.5h1M767 477.5h1M768.5 475v2M769 474.5h1M770 473.5h1M771.5 471v2M772 470.5h1M773 469.5h2M775 468.5h2M777 467.5h1M778 466.5h2M780 465.5h1M781 464.5h1M782 463.5h1M783 462.5h1M784 461.5h2M786 460.5h1M787 459.5h1M788 458.5h3M791 459.5h3M794 460.5h7M801 461.5h8M809 460.5h4M813 461.5h2M815 462.5h2M817 463.5h1M818 464.5h2M820 465.5h1M821 464.5h1M822 463.5h1M823 462.5h1M824.5 460v2M825 459.5h1M826 458.5h1M827 457.5h1M828 456.5h2M830 457.5h1M831 458.5h3M834 459.5h1M835 460.5h2M837 461.5h1M838 462.5h1M839 463.5h1M840 464.5h2M842 465.5h1M843 466.5h1M844 467.5h1M845.5 468v2M846.5 470v2M847 472.5h1M848.5 473v2M849 475.5h1M850.5 476v2M851.5 478v2M852 480.5h1M853 479.5h1M854 478.5h2M856 477.5h1M857 476.5h2M859 475.5h1M860 474.5h3M863 475.5h3M866 476.5h3M869 477.5h2M871 478.5h2M873 479.5h1M874 480.5h2M876 481.5h1M877 480.5h1M878 479.5h2M880 478.5h1M881 477.5h2M883 476.5h1M884 475.5h1M885 474.5h1M886.5 472v2M887 471.5h1M888 470.5h1M889 469.5h1M890.5 467v2M891 466.5h1M892 465.5h1M893 464.5h1M894 463.5h1M895 462.5h1M896.5 460v2M897 459.5h1M898 458.5h1M899 457.5h1M900 456.5h2M902 455.5h2M904 454.5h3M907 453.5h3M910 452.5h2M912 451.5h3M915 450.5h3M918 451.5h2M920 452.5h3M923 453.5h6M929 452.5h4M933 453.5h1M934 454.5h2M936 455.5h1M937 456.5h2M939 457.5h1M940.5 458v2M941 460.5h1M942.5 461v3M943 464.5h1M944.5 465v3M945 468.5h1M946.5 469v3M947 472.5h1M948.5 473v2M949 474.5h1M950 475.5h2M952 476.5h3M955 477.5h4M959 478.5h3M962 479.5h3M965.5 480v2M966 482.5h1M967 483.5h1M968.5 484v2M969 486.5h1M970 487.5h1M971.5 488v2M972 490.5h1" fill="none" stroke="#00ffff" stroke-width="1"/>
<polyline points="4,460.5 12,460.5 20,458.9 28,459.9 36,463.9 44,461.9 52,462.5 60,463.3 68,463.9 76,466.4 84,464.4 92,463.3 100,462.5 108,462.9 116,462.5 124,461.9 132,464.8 140,466.4 148,464.8 156,462.5 164,461.3 172,461.9 180,458.0 188,458.0 196,460.9 204,461.3 212,460.3 220,466.2 228,466.2 236,469.1 244,476.0 252,476.0 260,472.1 268,476.0 276,468.1 284,460.9 292,459.3 300,451.4 308,451.4 316,452.4 324,453.0 332,455.4 340,449.1 348,450.5 356,451.4 364,453.0 372,453.0 380,449.6 388,449.8 396,447.3 404,442.0 412,444.7 420,448.7 428,452.2 436,453.2 444,449.6 452,453.2 460,450.2 468,444.7 476,445.3 484,446.7 492,449.6 500,448.7 508,442.8 516,444.3 524,448.3 532,443.7 540,450.8 548,446.7 556,446.7 564,453.2 572,452.3 580,453.7 588,455.0 596,454.3 604,452.7 612,450.7 620,452.7 628,453.1 636,446.8 644,447.8 652,443.9 660,443.9 668,446.4 676,447.2 684,448.8 692,444.8 700,442.9 708,444.4 716,446.8 724,445.8 732,442.9 740,443.9 748,439.5 756,442.5 764,445.8 772,441.7 780,442.8 788,444.8 796,446.5 804,447.9 812,448.9 820,450.6 828,450.6 836,447.9 844,447.9 852,450.0 860,452.0 868,448.5 876,447.3 884,447.3 892,445.9 900,444.8 908,443.8 916,446.9 924,447.9 932,448.9 940,450.6 948,452.0 956,452.7 964,453.1 972,453.5" fill="none" stroke="#00ffff" stroke-width="3" stroke-linejoin="round" transform="translate(0.5,0.5)"/>
<path d="M4 430.5h1M5 431.5h1M6 432.5h2M8 433.5h1M9 434.5h2M11 435.5h1M12 436.5h5M17 435.5h4M21 436.5h1M22 437.5h1M23 438.5h1M24.5 439v2M25 441.5h1M26 442.5h1M27 443.5h1M28 444.5h3M31 443.5h3M34 442.5h3M37.5 440v2M38.5 438v2M39.5 436v2M40 435.5h1M41.5 433v2M42.5 431v2M43.5 429v2M44 428.5h1M45 427.5h1M46.5 425v2M47 424.5h1M48 423.5h1M49 422.5h1M50.5 420v2M51 419.5h1M52 418.5h3M55 417.5h3M58 416.5h7M65 417.5h5M70 418.5h2M72 419.5h3M75 420.5h4M79 421.5h3M82 422.5h5M87 423.5h3M90 424.5h3M93 425.5h1M94.5 426v2M95 428.5h1M96 429.5h1M97 430.5h1M98.5 431v2M99 433.5h1M100 434.5h1M101 435.5h1M102 436.5h2M104 437.5h1M105 438.5h2M107 439.5h1M108 440.5h5M113 439.5h4M117 438.5h1M118 437.5h1M119 436.5h1M120.5 434v2M121 433.5h1M122 432.5h1M123 431.5h1M124 430.5h9M133 431.5h1M134 432.5h1M135 433.5h1M136.5 434v2M137 436.5h1M138 437.5h1M139 438.5h1M140 439.5h2M142 438.5h2M144 437.5h3M147 436.5h2M149 435.5h1M150.5 433v2M151 432.5h1M152 431.5h1M153 430.5h1M154.5 428v2M155 427.5h1M156 426.5h3M159 427.5h3M162 428.5h5M167 429.5h3M170 430.5h5M175 429.5h3M178 428.5h4M182 429.5h1M183 430.5h3M186 431.5h1M187 432.5h2M189 433.5h1M190.5 434v2M191 436.5h1M192 437.5h1M193 438.5h1M194.5 439v2M195 441.5h1M196 442.5h5M201 441.5h6M207 440.5h3M210 439.5h3M213 438.5h2M215 437.5h2M217 436.5h1M218 435.5h2M220 434.5h1M221 433.5h1M222 432.5h1M223 431.5h1M224 430.5h1M225 429.5h1M226 428.5h1M227 427.5h1M228 426.5h1M229.5 424v2M230.5 422v2M231.5 420v2M232 419.5h1M233.5 417v2M234.5 415v2M235.5 413v2M236 412.5h2M238 411.5h2M240 410.5h3M243 409.5h2M244 408.5h1M245.5 406v2M246.5 403v3M247.5 401v2M248.5 398v3M249.5 396v2M250.5 393v3M251.5 391v2M252.5 389v2M253 388.5h1M254 387.5h1M255 386.5h1M256.5 384v2M257 383.5h1M258 382.5h1M259 381.5h1M260.5 380v2M261.5 382v3M262.5 385v2M263.5 387v3M264.5 390v3M265.5 393v3M266.5 396v2M267.5 398v3M268.5 401v2M269 401.5h2M271 400.5h2M273 399.5h1M274 398.5h2M276 397.5h5M281 396.5h5M286 397.5h2M288 398.5h3M291 399.5h2M293.5 397v2M294.5 395v2M295.5 393v2M296.5 391v2M297.5 389v2M298.5 387v2M299.5 385v2M300 384.5h3M303 383.5h3M306 382.5h4M310 381.5h2M312 380.5h3M315 379.5h2M317.5 380v2M318 382.5h1M319 383.5h1M320.5 384v2M321 386.5h1M322 387.5h1M323.5 388v2M324 390.5h1M325.5 391v2M326.5 393v2M327.5 395v2M328 397.5h1M329.5 398v2M330.5 400v2M331.5 402v2M332 404.5h5M337 403.5h5M342 402.5h2M344 401.5h3M347 400.5h4M351 399.5h3M354 398.5h5M359 397.5h3M362 396.5h7M369 395.5h4M373 394.5h1M374 393.5h2M376 392.5h1M377 391.5h2M379 390.5h1M380.5 389v2M381 391.5h1M382.5 392v3M383 395.5h1M384.5 396v3M385 399.5h1M386.5 400v3M387 403.5h1M388.5 404v2M389 405.5h1M390 406.5h2M392 407.5h3M395 408.5h12M407 409.5h3M410 410.5h4M414 409.5h2M416 408.5h3M419 407.5h3M422 406.5h2M424 405.5h3M427 404.5h2M429 403.5h2M431 402.5h2M433 401.5h1M434 400.5h2M436 399.5h1M437.5 397v2M438.5 395v2M439 394.5h1M440.5 392v2M441 391.5h1M442.5 389v2M443.5 387v2M444 386.5h1M445 387.5h1M446.5 388v2M447 390.5h1M448 391.5h1M449 392.5h1M450.5 393v2M451 395.5h1M452 396.5h5M457 395.5h5M462 394.5h1M463 393.5h3M466 392.5h1M467 391.5h3M470 392.5h2M472 393.5h3M475 394.5h2M477 395.5h1M478.5 396v2M479 398.5h1M480 399.5h1M481 400.5h1M482.5 401v2M483 403.5h1M484 404.5h1M485.5 405v2M486.5 407v2M487.5 409v2M488.5 411v2M489.5 413v2M490.5 415v2M491.5 417v2M492 419.5h1M493 420.5h2M495 421.5h2M497 422.5h1M498 423.5h2M500 424.5h1M501 423.5h1M502 422.5h1M503 421.5h1M504 420.5h1M505 419.5h1M506 418.5h1M507 417.5h1M508 416.5h1M509 417.5h2M511 418.5h2M513 419.5h1M514 420.5h2M516 421.5h2M518 422.5h2M520 423.5h3M523 424.5h6M529 425.5h4M532.5 426v2M533.5 428v4M534.5 432v5M535.5 437v4M536.5 441v5M537.5 446v4M538.5 450v5M539.5 455v4M540.5 459v3M541.5 459v2M542 458.5h1M543 457.5h1M544.5 455v2M545 454.5h1M546 453.5h1M547.5 451v2M548 450.5h1M549 449.5h1M550 448.5h1M551 447.5h1M552.5 445v2M553 444.5h1M554 443.5h1M555 442.5h1M556 441.5h1M557 440.5h1M558 439.5h1M559 438.5h1M560 437.5h1M561 436.5h1M562 435.5h1M563 434.5h1M564 433.5h1M565 432.5h1M566 431.5h1M567 430.5h1M568 429.5h1M569 428.5h1M570 427.5h1M571 426.5h1M572 425.5h2M574 424.5h2M576 423.5h3M579 422.5h10M589 421.5h1M590 420.5h1M591 419.5h1M592 418.5h2M594 417.5h1M595 416.5h1M596 415.5h1M597 414.5h2M599 413.5h2M601 412.5h1M602 411.5h2M604 410.5h1M605 409.5h1M606 408.5h1M607 407.5h1M608 406.5h1M609 405.5h1M610 404.5h1M611 403.5h1M612 402.5h2M614 403.5h1M615 404.5h3M618 405.5h1M619 406.5h2M621.5 407v2M622 409.5h1M623.5 410v2M624 412.5h1M625.5 413v2M626 415.5h1M627.5 416v2M628 418.5h9M637 419.5h2M639 420.5h2M641 421.5h1M642 422.5h2M644 423.5h1M645 422.5h1M646.5 420v2M647 419.5h1M648 418.5h1M649 417.5h1M650.5 415v2M651 414.5h1M652 413.5h2M654 414.5h1M655 415.5h3M658 416.5h1M659 417.5h2M661 416.5h2M663 415.5h2M665 414.5h1M666 413.5h2M668 412.5h2M670 413.5h1M671 414.5h3M674 415.5h1M675 416.5h3M678 415.5h2M680 414.5h3M683 413.5h2M685 412.5h1M686.5 410v2M687 409.5h1M688 408.5h1M689 407.5h1M690.5 405v2M691 404.5h1M692 403.5h1M693 402.5h2M695 401.5h2M697 400.5h1M698 399.5h2M700 398.5h2M702 399.5h1M703 400.5h3M706 401.5h1M707 402.5h2M709 403.5h1M710 404.5h1M711 405.5h1M712 406.5h1M713 407.5h1M714 408.5h1M715 409.5h1M716 410.5h1M717 409.5h2M719 408.5h2M721 407.5h1M722 406.5h2M724 405.5h1M725 406.5h2M727 407.5h2M729 408.5h1M730 409.5h2M732 410.5h1M733.5 411v2M734 413.5h1M735 414.5h1M736.5 415v2M737 417.5h1M738 418.5h1M739.5 419v2M740 421.5h1M741.5 419v2M742.5 417v2M743.5 415v2M744.5 413v2M745.5 411v2M746.5 409v2M747.5 407v2M748 406.5h1M749 407.5h1M750 408.5h1M751 409.5h1M752 410.5h2M754 411.5h1M755 412.5h1M756.5 413v2M757 415.5h1M758.5 416v3M759 419.5h1M760.5 420v3M761 423.5h1M762.5 424v3M763 427.5h1M764.5 428v2M765 429.5h2M767 430.5h3M770 431.5h3M773 432.5h1M774 433.5h1M775 434.5h1M776 435.5h1M777 436.5h1M778 437.5h1M779 438.5h1M780 439.5h1M781 440.5h2M783 441.5h2M785 442.5h1M786 443.5h2M788 444.5h3M791 445.5h3M794 446.5h3M797 447.5h2M799 448.5h2M801 449.5h1M802 450.5h2M804 451.5h3M807 450.5h3M810 449.5h3M813.5 450v2M814.5 452v2M815.5 454v2M816.5 456v2M817.5 458v2M818.5 460v2M819.5 462v2M820 464.5h1M821.5 462v2M822.5 460v2M823 459.5h1M824.5 457v2M825 456.5h1M826.5 454v2M827.5 452v2M828 451.5h5M833 450.5h8M841 449.5h4M845 448.5h1M846 447.5h1M847 446.5h1M848.5 444v2M849 443.5h1M850 442.5h1M851 441.5h1M852 440.5h5M857 441.5h4M861 440.5h1M862 439.5h1M863 438.5h1M864 437.5h2M866 436.5h1M867 435.5h1M868 434.5h10M878 435.5h2M880 436.5h3M883 437.5h2M885 436.5h1M886 435.5h1M887 434.5h1M888 433.5h1M889 432.5h1M890 431.5h1M891 430.5h1M892 429.5h1M893 430.5h1M894 431.5h1M895 432.5h1M896 433.5h1M897 434.5h1M898 435.5h1M899 436.5h1M900 437.5h3M903 438.5h3M906 439.5h4M910 440.5h1M911 441.5h3M914 442.5h1M915 443.5h4M919 444.5h3M922 445.5h4M926 446.5h1M927 447.5h3M930 448.5h1M931 449.5h2M933 448.5h1M934 447.5h2M936 446.5h1M937 445.5h2M939 444.5h1M940 443.5h1M941.5 441v2M942 440.5h1M943.5 438v2M944 437.5h1M945.5 435v2M946 434.5h1M947.5 432v2M948 431.5h2M950 430.5h2M952 429.5h3M955 428.5h6M961 429.5h4M965.5 430v2M966 432.5h1M967.5 433v2M968 435.5h1M969.5 436v2M970 438.5h1M971.5 439v2M972 441.5h1" fill="none" stroke="#ff00ff" stroke-width="1"/>
<path d="M4 462.5h2M6 461.5h2M8 460.5h3M11 459.5h3M14 458.5h2M16 457.5h3M19 456.5h2M21 455.5h1M22 454.5h2M24 453.5h1M25 452.5h2M27 451.5h1M28 450.5h2M30 451.5h2M32 452.5h3M35 453.5h6M41 452.5h5M46 451.5h1M47 450.5h3M50 449.5h1M51 448.5h6M57 449.5h4M61.5 447v2M62 446.5h1M63.5 444v2M64 443.5h1M65.5 441v2M66 440.5h1M67.5 438v2M68 437.5h3M71 438.5h3M74 439.5h4M78 438.5h1M79 437.5h3M82 436.5h1M83 435.5h4M87 436.5h3M90 437.5h5M95 436.5h3M98 435.5h3M101 436.5h1M102 437.5h1M103 438.5h1M104.5 439v2M105 441.5h1M106 442.5h1M107 443.5h1M108 444.5h2M110 443.5h1M111 442.5h3M114 441.5h1M115 440.5h2M117 441.5h1M118 442.5h1M119 443.5h1M120 444.5h2M122 445.5h1M123 446.5h1M124 447.5h5M129 448.5h5M134 447.5h1M135 446.5h3M138 445.5h1M139 444.5h2M141.5 442v2M142 441.5h1M143.5 439v2M144 438.5h1M145.5 436v2M146 435.5h1M147.5 433v2M148 432.5h5M153 433.5h4M157 434.5h1M158 435.5h2M160 436.5h1M161 437.5h2M163 438.5h1M164 439.5h2M166 440.5h2M168 441.5h3M171 442.5h2M173 441.5h1M174 440.5h1M175 439.5h1M176 438.5h1M177 437.5h1M178 436.5h1M179 435.5h1M180 434.5h2M182 435.5h1M183 436.5h3M186 437.5h1M187 438.5h2M189 439.5h1M190.5 440v2M191 442.5h1M192 443.5h1M193 444.5h1M194.5 445v2M195 447.5h1M196 448.5h2M198 449.5h1M199 450.5h3M202 451.5h1M203 452.5h2M205 453.5h2M207 454.5h2M209 455.5h1M210 456.5h2M212 457.5h1M213 458.5h1M214 459.5h1M215 460.5h1M216 461.5h2M218 462.5h1M219 463.5h1M220 464.5h1M221 463.5h1M222 462.5h1M223 461.5h1M224.5 459v2M225 458.5h1M226 457.5h1M227 456.5h1M228 455.5h1M229 454.5h2M231 453.5h2M233 452.5h1M234 451.5h2M236 450.5h2M238 449.5h1M239 448.5h3M242 447.5h1M243 446.5h10M252 445.5h1M253.5 443v2M254.5 441v2M255.5 439v2M256.5 437v2M257.5 435v2M258.5 433v2M259.5 431v2M260.5 429v2M261 428.5h2M263 427.5h2M265 426.5h1M266 425.5h2M268.5 423v2M269.5 421v2M270.5 419v2M271.5 417v2M272.5 414v3M273.5 412v2M274.5 410v2M275.5 408v2M276.5 406v2M277 405.5h1M278.5 403v2M279 402.5h1M280 401.5h1M281 400.5h1M282.5 398v2M283 397.5h1M284 396.5h1M285 397.5h1M286.5 398v2M287 400.5h1M288 401.5h1M289 402.5h1M290.5 403v2M291 405.5h1M292 406.5h2M294 405.5h2M296 404.5h3M299 403.5h3M302 402.5h2M304 401.5h3M307 400.5h2M309 401.5h1M310 402.5h1M311 403.5h1M312.5 404v2M313 406.5h1M314 407.5h1M315 408.5h1M316 409.5h1M317 408.5h1M318.5 406v2M319 405.5h1M320 404.5h1M321 403.5h1M322.5 401v2M323 400.5h1M324 399.5h1M325 400.5h2M327 401.5h2M329 402.5h1M330 403.5h2M332 404.5h1M333.5 402v2M334 401.5h1M335 400.5h1M336.5 398v2M337 397.5h1M338 396.5h1M339.5 394v2M340.5 393v2M341.5 395v2M342.5 397v2M343.5 399v2M344.5 401v2M345.5 403v2M346.5 405v2M347.5 407v2M348.5 409v2M349 411.5h1M350 412.5h2M352 413.5h1M353 414.5h2M355 415.5h1M356 416.5h2M358 417.5h1M359 418.5h3M362 419.5h1M363 420.5h12M375 419.5h3M378 418.5h3M381 417.5h1M382.5 415v2M383 414.5h1M384 413.5h1M385 412.5h1M386.5 410v2M387 409.5h1M388 408.5h3M391 407.5h3M394 406.5h7M401 405.5h4M404 406.5h1M405.5 407v2M406.5 409v2M407.5 411v2M408.5 413v2M409.5 415v2M410.5 417v2M411.5 419v2M412.5 421v2M413 422.5h4M417 421.5h8M425 422.5h6M431 421.5h3M434 420.5h4M438 419.5h2M440 418.5h3M443 417.5h2M445 416.5h1M446 415.5h2M448 414.5h1M449 413.5h2M451 412.5h1M452 411.5h1M453 410.5h1M454.5 408v2M455 407.5h1M456 406.5h1M457 405.5h1M458.5 403v2M459 402.5h1M460 401.5h1M461.5 399v2M462.5 397v2M463.5 395v2M464.5 393v2M465.5 391v2M466.5 389v2M467.5 387v2M468 386.5h1M469 387.5h1M470 388.5h2M472 389.5h1M473 390.5h2M475 391.5h1M476 392.5h3M479 393.5h3M482 394.5h4M486 393.5h1M487 392.5h3M490 391.5h1M491 390.5h2M493 391.5h1M494 392.5h2M496 393.5h1M497 394.5h2M499 395.5h1M500 396.5h1M501 397.5h1M502 398.5h1M503 399.5h1M504.5 400v2M505 402.5h1M506 403.5h1M507 404.5h1M508 405.5h1M509 406.5h1M510 407.5h1M511 408.5h1M512 409.5h2M514 410.5h1M515 411.5h1M516 412.5h1M517 413.5h2M519 414.5h2M521 415.5h1M522 416.5h2M524 417.5h2M526 416.5h2M528 415.5h3M531 414.5h2M533.5 415v2M534.5 417v2M535.5 419v2M536 421.5h1M537.5 422v2M538.5 424v2M539.5 426v2M540 428.5h1M541 429.5h1M542 430.5h2M544 431.5h1M545 432.5h2M547 433.5h1M548 434.5h3M551 433.5h3M554 432.5h3M556 433.5h1M557.5 434v2M558.5 436v3M559.5 439v2M560.5 441v3M561.5 444v2M562.5 446v3M563.5 449v2M564.5 451v2M565 451.5h1M566 450.5h2M568 449.5h1M569 448.5h2M571 447.5h1M572 446.5h2M574 445.5h1M575 444.5h3M578 443.5h1M579 442.5h2M581 441.5h1M582 440.5h1M583 439.5h1M584.5 437v2M585 436.5h1M586 435.5h1M587 434.5h1M588 433.5h5M593 432.5h4M597 431.5h1M598.5 429v2M599 428.5h1M600 427.5h1M601 426.5h1M602.5 424v2M603 423.5h1M604 422.5h1M605 423.5h1M606.5 424v2M607 426.5h1M608 427.5h1M609 428.5h1M610.5 429v2M611 431.5h1M612 432.5h2M614 431.5h1M615 430.5h3M618 429.5h1M619 428.5h3M622 427.5h1M623 426.5h3M626 425.5h1M627 424.5h2M629 423.5h1M630 422.5h2M632 421.5h1M633 420.5h2M635 419.5h1M636 418.5h9M645.5 419v2M646 421.5h1M647 422.5h1M648.5 423v2M649 425.5h1M650 426.5h1M651.5 427v2M652 429.5h3M655 428.5h3M658 427.5h3M661 428.5h1M662.5 429v2M663 431.5h1M664 432.5h1M665 433.5h1M666.5 434v2M667 436.5h1M668 437.5h2M670 438.5h1M671 439.5h3M674 440.5h1M675 441.5h3M678 442.5h2M680 443.5h3M683 444.5h2M685.5 442v2M686.5 440v2M687.5 438v2M688 437.5h1M689.5 435v2M690.5 433v2M691.5 431v2M692 430.5h5M697 431.5h4M701 432.5h1M702 433.5h1M703 434.5h1M704 435.5h1M705 436.5h1M706 437.5h1M707 438.5h1M708 439.5h3M711 438.5h3M714 437.5h3M717 436.5h1M718 435.5h1M719 434.5h1M720 433.5h2M722 432.5h1M723 431.5h1M724 430.5h1M725 429.5h1M726 428.5h1M727 427.5h1M728 426.5h2M730 425.5h1M731 424.5h1M732 423.5h2M734 422.5h1M735 421.5h3M738 420.5h1M739 419.5h4M743 418.5h3M746 417.5h7M753 416.5h5M758 417.5h2M760 418.5h3M763 419.5h3M766 418.5h1M767 417.5h3M770 416.5h1M771 415.5h2M773 416.5h1M774 417.5h1M775 418.5h1M776 419.5h2M778 420.5h1M779 421.5h1M780 422.5h1M781.5 423v2M782.5 425v2M783.5 427v2M784.5 429v2M785.5 431v2M786.5 433v2M787.5 435v2M788 437.5h2M790 438.5h2M792 439.5h3M795 440.5h2M797 441.5h1M798.5 442v2M799 444.5h1M800 445.5h1M801 446.5h1M802.5 447v2M803 449.5h1M804 450.5h2M806 449.5h2M808 448.5h3M811 447.5h6M817 446.5h5M822 445.5h2M824 444.5h3M827 443.5h2M829 444.5h1M830 445.5h2M832 446.5h1M833 447.5h2M835 448.5h1M836 449.5h3M839 450.5h3M842 451.5h3M845.5 449v2M846 448.5h1M847 447.5h1M848.5 445v2M849 444.5h1M850 443.5h1M851.5 441v2M852 440.5h2M854 439.5h1M855 438.5h3M858 437.5h1M859 436.5h2M861 435.5h1M862.5 433v2M863 432.5h1M864 431.5h1M865 430.5h1M866.5 428v2M867 427.5h1M868 426.5h2M870 427.5h1M871 428.5h3M874 429.5h1M875 430.5h6M881 429.5h6M887 428.5h3M890 427.5h3M893 428.5h1M894 429.5h1M895 430.5h1M896 431.5h2M898 432.5h1M899 433.5h1M900 434.5h2M902 433.5h2M904 432.5h3M907 431.5h2M909 432.5h1M910 433.5h1M911 434.5h1M912 435.5h1M913 436.5h1M914 437.5h1M915 438.5h1M916 439.5h1M917 438.5h2M919 437.5h2M921 436.5h1M922 435.5h2M924 434.5h9M933 435.5h1M934 436.5h1M935 437.5h1M936 438.5h1M937 439.5h1M938 440.5h1M939 441.5h1M940 442.5h1M941.5 440v2M942.5 438v2M943 437.5h1M944.5 435v2M945 434.5h1M946.5 432v2M947.5 430v2M948.5 428v2M949 427.5h1M950.5 424v3M951 423.5h1M952.5 420v3M953 419.5h1M954.5 416v3M955 415.5h1M956.5 413v2M957 413.5h4M961 412.5h8M969 411.5h4" fill="none" stroke="#ff0000" stroke-width="1"/>
<path d="M4 470.5h1M5.5 468v2M6.5 466v2M7.5 464v2M8 463.5h1M9.5 461v2M10.5 459v2M11.5 457v2M12 456.5h1M13 457.5h1M14 458.5h1M15 459.5h1M16.5 460v2M17 462.5h1M18 463.5h1M19 464.5h1M20 465.5h2M22 464.5h2M24 463.5h3M27 462.5h2M29 463.5h1M30 464.5h1M31 465.5h1M32 466.5h2M34 467.5h1M35 468.5h1M36 469.5h1M37.5 467v2M38.5 465v2M39 464.5h1M40.5 462v2M41 461.5h1M42.5 459v2M43.5 457v2M44 456.5h2M46 455.5h1M47 454.5h3M50 453.5h1M51 452.5h6M57 453.5h4M61 452.5h1M62 451.5h1M63 450.5h1M64 449.5h1M65 448.5h1M66 447.5h1M67 446.5h1M68 445.5h3M71 444.5h3M74 443.5h3M77 442.5h1M78 441.5h1M79 440.5h1M80.5 438v2M81 437.5h1M82 436.5h1M83 435.5h1M84 434.5h5M89 435.5h5M94 434.5h2M96 433.5h3M99 432.5h4M103 431.5h3M106 430.5h5M111 429.5h3M114 428.5h7M121 429.5h5M126 430.5h2M128 431.5h3M131 432.5h2M133.5 433v2M134 435.5h1M135.5 436v2M136 438.5h1M137.5 439v2M138 441.5h1M139.5 442v2M140 444.5h2M142 445.5h1M143 446.5h3M146 447.5h1M147 448.5h4M151 447.5h3M154 446.5h3M157 445.5h1M158 444.5h1M159 443.5h1M160 442.5h2M162 441.5h1M163 440.5h1M164 439.5h2M166 440.5h1M167 441.5h3M170 442.5h1M171 443.5h2M173 444.5h1M174 445.5h2M176 446.5h1M177 447.5h2M179 448.5h1M180 449.5h3M183 448.5h3M186 447.5h7M193 446.5h6M199 447.5h3M202 448.5h3M205 449.5h1M206.5 450v2M207 452.5h1M208 453.5h1M209 454.5h1M210.5 455v2M211 457.5h1M212 458.5h1M213 459.5h1M214 460.5h1M215 461.5h1M216 462.5h1M217 463.5h1M218 464.5h1M219 465.5h1M220 466.5h9M229 467.5h2M231 468.5h2M233 469.5h1M234 470.5h2M236 471.5h2M238 472.5h2M240 473.5h3M243 474.5h2M245 473.5h1M246 472.5h2M248 471.5h1M249 470.5h2M251 469.5h1M252 468.5h2M254 469.5h2M256 470.5h3M259 471.5h2M261 470.5h1M262 469.5h2M264 468.5h1M265 467.5h2M267 466.5h1M268.5 464v2M269.5 462v2M270.5 459v3M271.5 456v3M272.5 454v2M273.5 451v3M274.5 448v3M275.5 446v2M276.5 444v2M277.5 442v2M278 441.5h1M279 440.5h1M280.5 438v2M281 437.5h1M282 436.5h1M283.5 434v2M284.5 432v2M285.5 429v3M286.5 426v3M287.5 423v3M288.5 420v3M289.5 417v3M290.5 414v3M291.5 411v3M292.5 409v2M293 409.5h1M294 408.5h1M295 407.5h3M298 406.5h1M299 405.5h2M301 404.5h2M303 403.5h2M305 402.5h1M306 401.5h2M308 400.5h2M310 399.5h1M311 398.5h3M314 397.5h1M315 396.5h10M325.5 397v2M326.5 399v2M327.5 401v2M328.5 403v2M329.5 405v2M330.5 407v2M331.5 409v2M332.5 410v2M333.5 408v2M334.5 406v2M335.5 404v2M336.5 402v2M337.5 400v2M338.5 398v2M339.5 396v2M340.5 394v2M341 394.5h2M343 393.5h3M346 392.5h3M349.5 390v2M350.5 388v2M351 387.5h1M352.5 385v2M353 384.5h1M354.5 382v2M355.5 380v2M356 379.5h1M357.5 380v2M358 382.5h1M359 383.5h1M360.5 384v2M361 386.5h1M362 387.5h1M363.5 388v2M364 390.5h9M373 389.5h1M374 388.5h2M376 387.5h1M377 386.5h2M379 385.5h1M380 384.5h11M391 383.5h3M394 382.5h3M397.5 380v2M398 379.5h1M399.5 377v2M400 376.5h1M401.5 374v2M402 373.5h1M403.5 371v2M404 370.5h13M417 371.5h4M421.5 372v2M422.5 374v2M423.5 376v2M424.5 378v2M425.5 380v2M426.5 382v2M427.5 384v2M428 386.5h2M430 387.5h1M431 388.5h3M434 389.5h1M435 390.5h2M437 389.5h2M439 388.5h2M441 387.5h1M442 386.5h2M444 385.5h2M446 386.5h1M447 387.5h3M450 388.5h1M451 389.5h4M455 388.5h3M458 387.5h3M461 386.5h1M462 385.5h1M463 384.5h1M464 383.5h2M466 382.5h1M467 381.5h1M468 380.5h1M469 379.5h1M470 378.5h1M471 377.5h1M472.5 375v2M473 374.5h1M474 373.5h1M475 372.5h1M476 371.5h1M477.5 369v2M478 368.5h1M479.5 366v2M480 365.5h1M481.5 363v2M482 362.5h1M483.5 360v2M484.5 359v2M485.5 361v2M486.5 363v2M487.5 365v2M488.5 367v2M489.5 369v2M490.5 371v2M491.5 373v2M492.5 375v2M493 376.5h2M495 377.5h3M498 378.5h3M500 377.5h1M501.5 375v2M502.5 373v2M503.5 371v2M504.5 368v3M505.5 366v2M506.5 364v2M507.5 362v2M508.5 360v2M509 360.5h1M510 361.5h2M512 362.5h3M515 363.5h2M517.5 364v2M518.5 366v2M519.5 368v2M520.5 370v2M521.5 372v2M522.5 374v2M523.5 376v2M524 378.5h9M533 379.5h1M534 380.5h1M535 381.5h1M536 382.5h1M537 383.5h1M538 384.5h1M539 385.5h1M540 386.5h3M543 385.5h3M546 384.5h3M549 385.5h1M550 386.5h2M552 387.5h1M553 388.5h2M555 389.5h1M556 390.5h1M557.5 391v2M558 393.5h1M559.5 394v2M560 396.5h1M561.5 397v2M562 399.5h1M563.5 400v2M564 402.5h5M569 403.5h4M573.5 404v2M574.5 406v2M575 408.5h1M576.5 409v2M577 411.5h1M578.5 412v2M579.5 414v2M580 416.5h5M585 417.5h4M589 416.5h2M591 415.5h2M593 414.5h1M594 413.5h2M596 412.5h3M599 411.5h3M602 410.5h3M605 409.5h1M606 408.5h1M607 407.5h1M608.5 405v2M609 404.5h1M610 403.5h1M611 402.5h1M612 401.5h1M613 400.5h1M614 399.5h1M615 398.5h1M616 397.5h1M617 396.5h1M618 395.5h1M619 394.5h1M620 393.5h1M621 394.5h1M622 395.5h1M623 396.5h1M624 397.5h2M626 398.5h1M627 399.5h1M628 400.5h2M630 399.5h2M632 398.5h3M635 397.5h4M639 396.5h3M642 395.5h7M649 396.5h5M654 395.5h2M656 394.5h3M659 393.5h2M660 394.5h1M661.5 395v2M662.5 397v2M663.5 399v2M664.5 401v2M665.5 403v2M666.5 405v2M667.5 407v2M668.5 409v2M669 410.5h2M671 409.5h3M674 408.5h3M677 409.5h1M678 410.5h1M679 411.5h1M680 412.5h1M681 413.5h1M682 414.5h1M683 415.5h1M684 416.5h2M686 417.5h2M688 418.5h3M691 419.5h4M695 420.5h3M698 421.5h3M701 420.5h1M702 419.5h2M704 418.5h1M705 417.5h2M707 416.5h1M708 415.5h2M710 416.5h1M711 417.5h3M714 418.5h1M715 419.5h6M721 420.5h5M726 419.5h2M728 418.5h3M731 417.5h3M734 416.5h2M736 415.5h3M739 414.5h6M745 413.5h8M753 414.5h4M757 415.5h1M758 416.5h2M760 417.5h1M761 418.5h2M763 419.5h1M764 420.5h10M774 421.5h2M776 422.5h3M779 423.5h2M781.5 421v2M782 420.5h1M783 419.5h1M784.5 417v2M785 416.5h1M786 415.5h1M787.5 413v2M788 412.5h1M789 413.5h1M790 414.5h1M791 415.5h1M792 416.5h1M793 417.5h1M794 418.5h1M795 419.5h1M796 420.5h1M797 421.5h1M798 422.5h1M799 423.5h1M800.5 424v2M801 426.5h1M802 427.5h1M803 428.5h1M804 429.5h3M807 430.5h3M810 431.5h3M812 432.5h1M813 433.5h1M814.5 434v3M815 437.5h1M816.5 438v3M817 441.5h1M818.5 442v3M819 445.5h1M820.5 446v2M821 447.5h4M825 446.5h4M829 445.5h1M830.5 443v2M831 442.5h1M832 441.5h1M833 440.5h1M834.5 438v2M835 437.5h1M836 436.5h1M837 437.5h1M838 438.5h1M839 439.5h1M840 440.5h1M841 441.5h1M842 442.5h1M843 443.5h1M844 444.5h1M845.5 445v2M846 447.5h1M847 448.5h1M848.5 449v2M849 451.5h1M850 452.5h1M851.5 453v2M852 455.5h3M855 456.5h3M858 457.5h4M862 458.5h2M864 459.5h3M867 460.5h2M869 459.5h1M870 458.5h1M871 457.5h1M872 456.5h2M874 455.5h1M875 454.5h1M876 453.5h2M878 452.5h2M880 451.5h3M883 450.5h3M886 451.5h1M887 452.5h3M890 453.5h1M891 454.5h2M893 455.5h1M894 456.5h2M896 457.5h1M897 458.5h2M899 459.5h1M900 460.5h1M901 459.5h1M902 458.5h1M903 457.5h1M904.5 455v2M905 454.5h1M906 453.5h1M907 452.5h1M908 451.5h1M909 452.5h1M910.5 453v2M911 455.5h1M912 456.5h1M913 457.5h1M914.5 458v2M915 460.5h1M916 461.5h1M917 462.5h2M919 463.5h2M921 464.5h1M922 465.5h2M924 466.5h3M927 465.5h3M930 464.5h4M934 465.5h1M935 466.5h3M938 467.5h1M939 468.5h2M941 469.5h1M942 470.5h1M943 471.5h1M944 472.5h1M945 473.5h1M946 474.5h1M947 475.5h1M948 476.5h1M949 475.5h2M951 474.5h2M953 473.5h1M954 472.5h2M956 471.5h1M957 472.5h1M958 473.5h1M959 474.5h1M960 475.5h2M962 476.5h1M963 477.5h1M964 478.5h5M969 479.5h4" fill="none" stroke="#ffd700" stroke-width="1"/>
</g>
<path d="M5 366.5H978" stroke="#ffd700" stroke-width="1" stroke-dasharray="3 3" fill="none"/>
<path d="M5 453.5H978" stroke="#ffd700" stroke-width="1" stroke-dasharray="3 3" fill="none"/>
<path d="M5 540.5H978" stroke="#ffd700" stroke-width="1" stroke-dasharray="3 3" fill="none"/>
<rect x="4" y="545" width="1" height="4" fill="#fff"/>
<rect x="68" y="545" width="1" height="4" fill="#fff"/>
<rect x="132" y="545" width="1" height="4" fill="#fff"/>
<rect x="196" y="545" width="1" height="4" fill="#fff"/>
<rect x="260" y="545" width="1" height="4" fill="#fff"/>
<rect x="324" y="545" width="1" height="4" fill="#fff"/>
<rect x="388" y="545" width="1" height="4" fill="#fff"/>
<rect x="452" y="545" width="1" height="4" fill="#fff"/>
<rect x="516" y="545" width="1" height="4" fill="#fff"/>
<rect x="580" y="545" width="1" height="4" fill="#fff"/>
<rect x="644" y="545" width="1" height="4" fill="#fff"/>
<rect x="708" y="545" width="1" height="4" fill="#fff"/>
<rect x="772" y="545" width="1" height="4" fill="#fff"/>
<rect x="836" y="545" width="1" height="4" fill="#fff"/>
<rect x="900" y="545" width="1" height="4" fill="#fff"/>
<rect x="964" y="545" width="1" height="4" fill="#fff"/>
<path d="M4 540L9 545H4Z" fill="#8a99a8" shape-rendering="geometricPrecision"/>
<rect x="979" y="350" width="2" height="1" fill="#fff"/><rect x="979" y="324" width="2" height="1" fill="#fff"/><rect x="979" y="330" width="2" height="1" fill="#fff"/>
</svg>
<svg width="1018" height="563" viewBox="0 0 1018 563">
<rect x="938" y="368" width="7" height="7" fill="#3cb371" shape-rendering="crispEdges"/>
<circle cx="959.5" cy="371" r="10" fill="#3cb371"/>
<path d="M952 367H967L959.5 375Z" fill="#ffff00"/>
<rect x="938" y="393" width="7" height="7" fill="#ff8c00" shape-rendering="crispEdges"/>
<circle cx="959.5" cy="396" r="10" fill="#ff8c00"/>
<path d="M952 398H967L959.5 390Z" fill="#00ff00"/>
<rect x="938" y="418" width="7" height="7" fill="#ff8c00" shape-rendering="crispEdges"/>
<circle cx="959.5" cy="421" r="10" fill="#ff8c00"/>
<path d="M952 417H967L959.5 425Z" fill="#ffff00"/>
<rect x="938" y="443" width="7" height="7" fill="#ffffff" shape-rendering="crispEdges"/>
<circle cx="959.5" cy="446" r="10" fill="#ff8c00"/>
<path d="M952 442H967L959.5 450Z" fill="#ffffff"/>
<rect x="938" y="468" width="7" height="7" fill="#ff8c00" shape-rendering="crispEdges"/>
<circle cx="959.5" cy="471" r="10" fill="#ff8c00"/>
<path d="M952 467H967L959.5 475Z" fill="#ffff00"/>
<rect x="938" y="493" width="7" height="7" fill="#3cb371" shape-rendering="crispEdges"/>
<circle cx="959.5" cy="496" r="10" fill="#ff8c00"/>
<circle cx="959.3" cy="494.8" r="6.3" fill="#808080"/>
<rect x="938" y="518" width="7" height="7" fill="#3cb371" shape-rendering="crispEdges"/>
<circle cx="959.5" cy="521" r="10" fill="#ff8c00"/>
<path d="M952 517H967L959.5 525Z" fill="#ffff00"/>
<circle cx="967.6" cy="12" r="5.3" fill="none" stroke="#fff" stroke-width="1.1"/><circle cx="965.7" cy="10.1" r="0.8" fill="#fff"/><circle cx="969.5" cy="10.1" r="0.8" fill="#fff"/><path d="M964.7 14.6Q967.6 10.4 970.5 14.6" stroke="#fff" stroke-width="1.1" fill="none"/>
<path d="M7 9H14.5L10.75 13.2Z" fill="#fff"/>
</svg>
<div class="t" style="left:19px;top:5px">EURUSD,M1</div>
<div class="t" style="left:879px;top:6px">stoch power EA_5g</div>
<div class="t" style="left:9px;top:324px;height:9px;overflow:hidden;width:960px"><span style="position:relative;top:2px">MACD(10,16,9) 0.000051 0.000038 0.000012 0.000051</span></div>
<div class="t" style="left:9px;top:337px;height:9px;overflow:hidden;width:960px"><span style="position:relative;top:2px">M1: StochRsi (13,14,3,SMA,3,SMA) 78.8918 72.8360</span></div>
<div class="t" style="left:9px;top:352px">+JoGET_MultiPairs+ 43.0027 51.0716 40.0336 49.9261 43.7138 39.7206 33.5504</div>
<div class="ax" style="top:29px;left:984px">1.06262</div>
<div class="ax" style="top:64px;left:984px">1.06207</div>
<div class="ax" style="top:99px;left:984px">1.06152</div>
<div class="ax" style="top:134px;left:984px">1.06097</div>
<div class="ax" style="top:205px;left:984px">1.05987</div>
<div class="ax" style="top:240px;left:984px">1.05932</div>
<div class="ax" style="top:275px;left:984px">1.05877</div>
<div class="ax" style="top:310px;left:984px">1.05822</div>
<div class="ax" style="top:171px;left:984px;color:#000">1.06039</div>
<div class="ax" style="top:196.5px;left:984px;color:#000">1.06001</div>
<div class="ax" style="top:320px;left:986px">0.00018</div>
<div class="ax" style="top:324px;left:981px">-0.00040</div>
<div class="ax" style="top:336px;left:982px;background:#fff;color:#000;width:9.5px;height:10px;overflow:hidden">10</div>
<div class="ax" style="top:337px;left:991px">50</div>
<div class="ax" style="top:350px;left:982px">73.6794</div>
<div class="ax" style="top:359px;left:982px">70</div>
<div class="ax" style="top:447px;left:982px">50</div>
<div class="ax" style="top:534px;left:982px">28.945</div>
<div class="ax" style="top:534px;left:982px">30</div>
<div class="t" style="left:3.5px;top:549px">10 Apr 2015</div>
<div class="t" style="left:67.5px;top:549px">10 Apr 15:57</div>
<div class="t" style="left:131.5px;top:549px">10 Apr 16:05</div>
<div class="t" style="left:195.5px;top:549px">10 Apr 16:13</div>
<div class="t" style="left:259.5px;top:549px">10 Apr 16:21</div>
<div class="t" style="left:323.5px;top:549px">10 Apr 16:29</div>
<div class="t" style="left:387.5px;top:549px">10 Apr 16:37</div>
<div class="t" style="left:451.5px;top:549px">10 Apr 16:45</div>
<div class="t" style="left:515.5px;top:549px">10 Apr 16:53</div>
<div class="t" style="left:579.5px;top:549px">10 Apr 17:01</div>
<div class="t" style="left:643.5px;top:549px">10 Apr 17:09</div>
<div class="t" style="left:707.5px;top:549px">10 Apr 17:17</div>
<div class="t" style="left:771.5px;top:549px">10 Apr 17:25</div>
<div class="t" style="left:835.5px;top:549px">10 Apr 17:33</div>
<div class="t" style="left:899.5px;top:549px">10 Apr 17:41</div>
<div class="t" style="left:963.5px;top:549px">10 Apr 17:49</div>
<div class="lg" style="top:365px;color:#ff0000">EURUSD</div>
<div class="lg" style="top:390px;color:#ff00ff">GBPUSD</div>
<div class="lg" style="top:415px;color:#ffd700">AUDUSD</div>
<div class="lg" style="top:440px;color:#20b2aa">MID.Line</div>
<div class="lg" style="top:465px;color:#c0c0c0">USDCAD</div>
<div class="lg" style="top:490px;color:#00e5ee">USDCHF</div>
<div class="lg" style="top:515px;color:#32cd32">USDJPY</div>
<svg width="1018" height="563" viewBox="0 0 1018 563" shape-rendering="crispEdges"><clipPath id="mc"><rect x="879" y="438" width="58" height="20"/></clipPath><g clip-path="url(#mc)"><polyline points="860,452.0 868,448.5 876,447.3 884,447.3 892,445.9 900,444.8 908,443.8 916,446.9 924,447.9 932,448.9 940,450.6 948,452.0" fill="none" stroke="#00ffff" stroke-width="3" stroke-linejoin="round" transform="translate(0.5,0.5)"/><path d="M860 441.5h1M861 440.5h1M862 439.5h1M863 438.5h1M864 437.5h2M866 436.5h1M867 435.5h1M868 434.5h10M878 435.5h2M880 436.5h3M883 437.5h2M885 436.5h1M886 435.5h1M887 434.5h1M888 433.5h1M889 432.5h1M890 431.5h1M891 430.5h1M892 429.5h1M893 430.5h1M894 431.5h1M895 432.5h1M896 433.5h1M897 434.5h1M898 435.5h1M899 436.5h1M900 437.5h3M903 438.5h3M906 439.5h4M910 440.5h1M911 441.5h3M914 442.5h1M915 443.5h4M919 444.5h3M922 445.5h4M926 446.5h1M927 447.5h3M930 448.5h1M931 449.5h2M933 448.5h1M934 447.5h2M936 446.5h1M937 445.5h2M939 444.5h1M940 443.5h1M941.5 441v2M942 440.5h1M943.5 438v2M944 437.5h1M945.5 435v2M946 434.5h1M947.5 432v2M948 431.5h1" fill="none" stroke="#ff00ff" stroke-width="1"/><path d="M860 436.5h1M861 435.5h1M862.5 433v2M863 432.5h1M864 431.5h1M865 430.5h1M866.5 428v2M867 427.5h1M868 426.5h2M870 427.5h1M871 428.5h3M874 429.5h1M875 430.5h6M881 429.5h6M887 428.5h3M890 427.5h3M893 428.5h1M894 429.5h1M895 430.5h1M896 431.5h2M898 432.5h1M899 433.5h1M900 434.5h2M902 433.5h2M904 432.5h3M907 431.5h2M909 432.5h1M910 433.5h1M911 434.5h1M912 435.5h1M913 436.5h1M914 437.5h1M915 438.5h1M916 439.5h1M917 438.5h2M919 437.5h2M921 436.5h1M922 435.5h2M924 434.5h9M933 435.5h1M934 436.5h1M935 437.5h1M936 438.5h1M937 439.5h1M938 440.5h1M939 441.5h1M940 442.5h1M941.5 440v2M942.5 438v2M943 437.5h1M944.5 435v2M945 434.5h1M946.5 432v2M947.5 430v2M948 429.5h1" fill="none" stroke="#ff0000" stroke-width="1"/><path d="M860 457.5h2M862 458.5h2M864 459.5h3M867 460.5h2M869 459.5h1M870 458.5h1M871 457.5h1M872 456.5h2M874 455.5h1M875 454.5h1M876 453.5h2M878 452.5h2M880 451.5h3M883 450.5h3M886 451.5h1M887 452.5h3M890 453.5h1M891 454.5h2M893 455.5h1M894 456.5h2M896 457.5h1M897 458.5h2M899 459.5h1M900 460.5h1M901 459.5h1M902 458.5h1M903 457.5h1M904.5 455v2M905 454.5h1M906 453.5h1M907 452.5h1M908 451.5h1M909 452.5h1M910.5 453v2M911 455.5h1M912 456.5h1M913 457.5h1M914.5 458v2M915 460.5h1M916 461.5h1M917 462.5h2M919 463.5h2M921 464.5h1M922 465.5h2M924 466.5h3M927 465.5h3M930 464.5h4M934 465.5h1M935 466.5h3M938 467.5h1M939 468.5h2M941 469.5h1M942 470.5h1M943 471.5h1M944 472.5h1M945 473.5h1M946 474.5h1M947 475.5h1M948 476.5h1" fill="none" stroke="#ffd700" stroke-width="1"/><path d="M5 453.5H978" stroke="#ffd700" stroke-width="1" stroke-dasharray="3 3" fill="none"/></g></svg>
</div>
<div style="position:absolute;left:0;top:563px;width:1018px;height:2px;background:#fff"></div>
<div style="position:absolute;left:0;top:565px;width:1018px;height:1px;background:#1a1a1a"></div>
<div style="position:absolute;left:0;top:566px;width:1px;height:18px;background:#404040"></div>
<div style="position:absolute;left:0;top:586px;width:1018px;height:2px;background:#fff"></div>
<div style="position:absolute;left:14px;top:610px;width:1004px;height:2px;background:#fcfcfc"></div>
<div style="position:absolute;left:159px;top:565px;width:78px;height:18px;background:#fff;border:1px solid #000;border-top:none;box-shadow:1px 1px 0 #b8b8b8"></div>
<div class="tab" style="left:12px;">EURJPY,M1</div>
<div class="tab" style="left:89px;">EURUSD,M1</div>
<div class="tab" style="left:169px;color:#000">EURUSD,M1</div>
<div class="tab" style="left:249px;">EURUSD,M1</div>
<div class="tab" style="left:329px;">EURUSD,M1</div>
<div class="sep" style="left:79px"></div>
<div class="sep" style="left:319px"></div>
<div class="sep" style="left:399px"></div>
<svg style="position:absolute;left:990px;top:568px" width="28" height="12"><path d="M8.5 3.5V10.5L4.5 7Z" fill="#8c8c8c"/><path d="M22 3.5V10.5L26 7Z" fill="#8c8c8c"/></svg>
<div style="position:absolute;left:14px;top:589px;width:1004px;height:21px;background:#fff;border-left:1px solid #a0a0a0;border-top:1px solid #a0a0a0;border-bottom:1px solid #e3e3e3;box-sizing:border-box"></div>
<div style="position:absolute;left:3px;top:588px;font-size:12px;line-height:12px;font-weight:bold;color:#000">×</div>
<div style="position:absolute;left:4px;top:601px;width:5px;height:1px;background:#909090"></div>
<div style="position:absolute;left:4px;top:603px;width:5px;height:1px;background:#909090"></div>
<div style="position:absolute;left:4px;top:605px;width:5px;height:1px;background:#909090"></div>
<div style="position:absolute;left:4px;top:607px;width:5px;height:1px;background:#909090"></div>
<div style="position:absolute;left:20px;top:597px;width:7px;height:7px;border-radius:50%;background:#b0b0b0;border:1px solid #8a8a8a;box-sizing:border-box"></div>
<div style="position:absolute;left:36px;top:593px;font-size:10.6px;line-height:14px;color:#000;white-space:pre;letter-spacing:0.090px">Balance: 63 169.23 USD</div>
<div style="position:absolute;left:162px;top:593px;font-size:10.6px;line-height:14px;color:#000;white-space:pre;letter-spacing:0.320px">Profit/Loss: 0.00</div>
<div style="position:absolute;left:251.8px;top:593px;font-size:10.6px;line-height:14px;color:#000;white-space:pre;letter-spacing:0.161px">Equity: 63 169.23</div>
<div style="position:absolute;left:345.1px;top:593px;font-size:10.6px;line-height:14px;color:#000;white-space:pre;letter-spacing:0.208px">Free margin: 63 169.23</div>
<div style="position:absolute;left:0;top:614px;width:1018px;height:1px;background:#a0a0a0"></div>
<div class="st"><span style="left:3px">For Help, press F1</span><i style="left:298px"></i><span style="left:304px">Default</span><i style="left:413px"></i><span style="left:419px">2015.04.10 17:55</span><i style="left:515px"></i><span style="left:521px">O: 1.06256</span><i style="left:586px"></i><span style="left:592px">H: 1.06281</span><i style="left:657px"></i><span style="left:663px">L: 1.06249</span><i style="left:727px"></i><span style="left:733px">C: 1.06274</span><i style="left:795px"></i><span style="left:801px">V: 218</span><i style="left:861px"></i>
<svg style="position:absolute;left:867px;top:6px" width="26" height="6"><rect x="0" y="1" width="2" height="5" fill="#5a8a00"/><rect x="3" y="1" width="2" height="5" fill="#5a8a00"/><rect x="6" y="1" width="2" height="5" fill="#5a8a00"/><rect x="9" y="1" width="2" height="5" fill="#5a8a00"/><rect x="12" y="1" width="2" height="5" fill="#5a8a00"/><rect x="15" y="1" width="2" height="5" fill="#5a8a00"/><rect x="18" y="1" width="2" height="5" fill="#5a8a00"/><rect x="21" y="2" width="1" height="1" fill="#5a8a00"/></svg>
<span style="left:939px">27/1 kb</span></div>
</body></html>
